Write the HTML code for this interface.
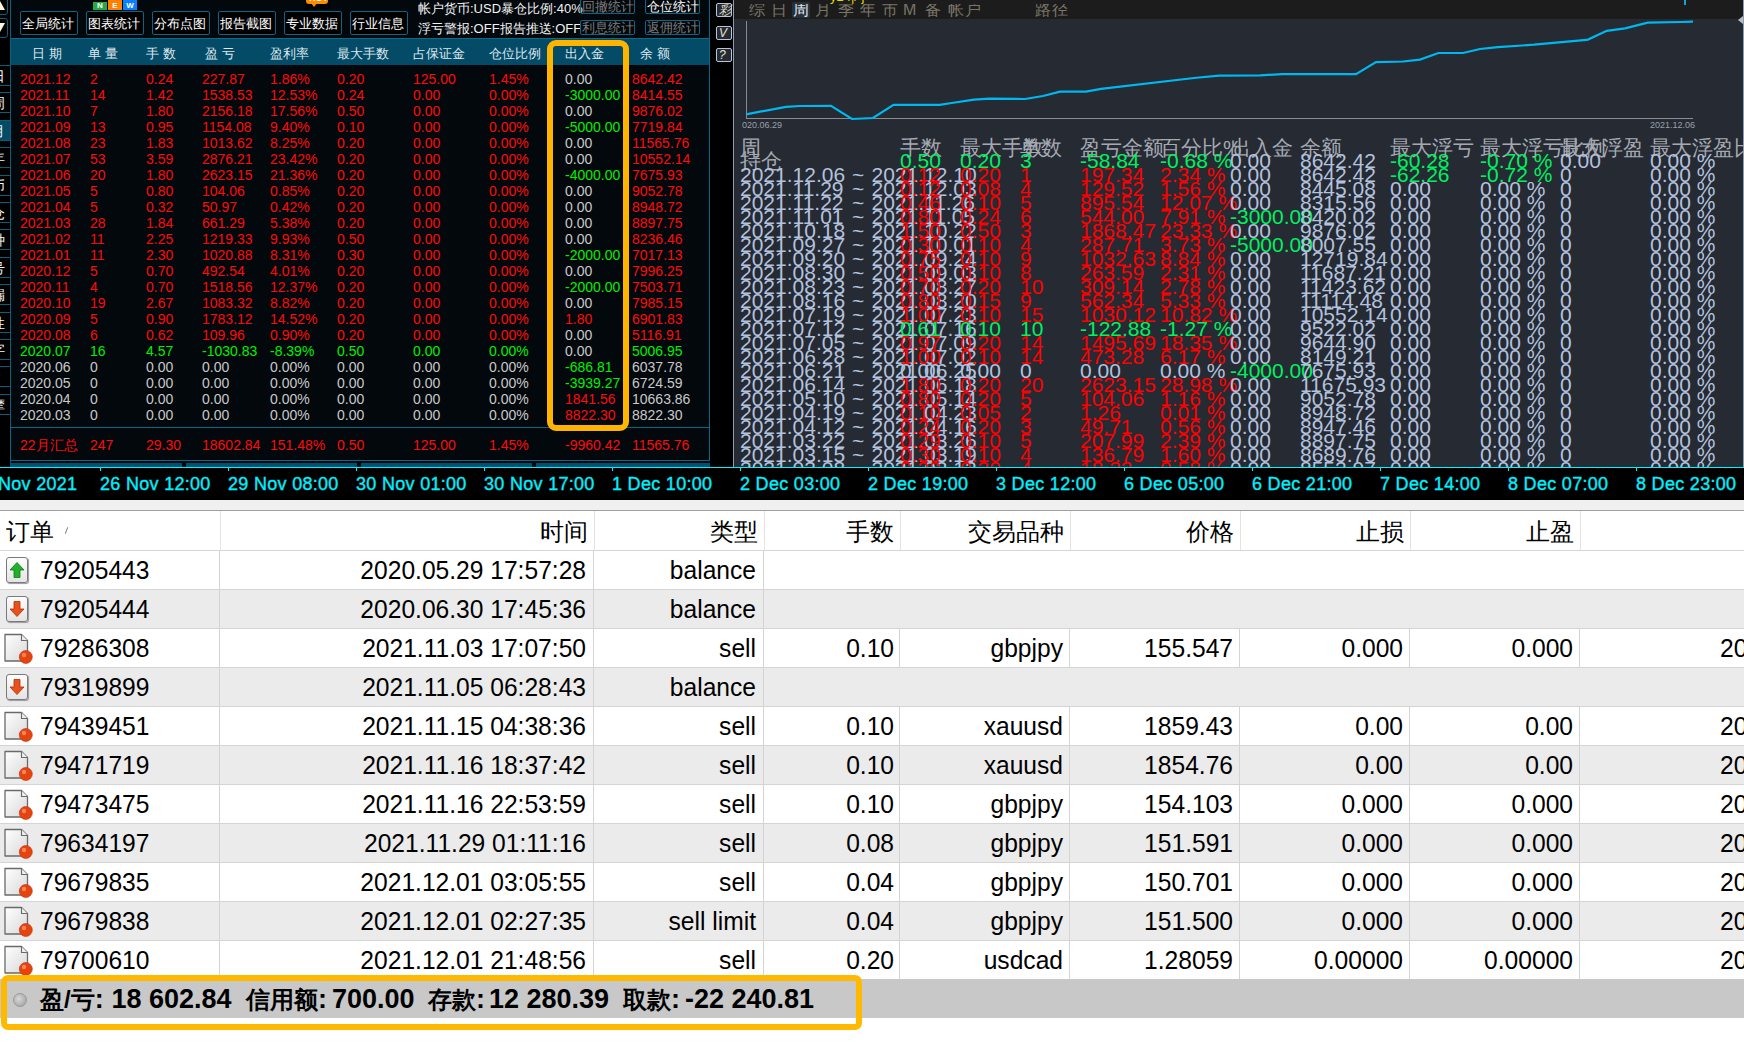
<!DOCTYPE html><html><head><meta charset="utf-8"><style>
*{margin:0;padding:0;box-sizing:border-box}
html,body{width:1744px;height:1042px;overflow:hidden;background:#fff;font-family:"Liberation Sans",sans-serif}
.ab{position:absolute;white-space:pre;line-height:1}
#lp{position:absolute;left:0;top:0;width:735px;height:467px;background:#03080c;overflow:hidden}
#rp{position:absolute;left:735px;top:0;width:1009px;height:467px;background:#252a33;overflow:hidden}
#ax{position:absolute;left:0;top:467px;width:1744px;height:33px;background:#000;overflow:hidden}
#bt{position:absolute;left:0;top:500px;width:1744px;height:542px;background:#fff;overflow:hidden}
</style></head><body>
<div id="lp">
<div class="ab" style="left:0;top:0;width:10px;height:467px;background:#000"></div>
<div class="ab" style="left:10px;top:0;width:1px;height:467px;background:#0b5f7c"></div>
<div class="ab" style="left:-4px;top:-6px;width:12px;height:21px;border:1px solid #0b5f7c;border-radius:3px"></div>
<div class="ab" style="left:-4px;top:18px;width:12px;height:20px;border:1px solid #0b5f7c;border-radius:3px"></div>
<div class="ab" style="left:-5px;top:1px;width:0;height:0;border-left:5px solid transparent;border-right:5px solid transparent;border-bottom:9px solid #fff4e0"></div>
<div class="ab" style="left:-5px;top:23px;width:0;height:0;border-left:5px solid transparent;border-right:5px solid transparent;border-top:9px solid #fff4e0"></div>
<div class="ab" style="left:0;top:65px;width:10px;height:21px;background:#000;border-top:1px solid #0b5f7c;border-bottom:1px solid #0b5f7c;overflow:hidden"><div class="ab" style="left:-9px;top:3px;font-size:14px;color:#f4f4f4">日</div></div>
<div class="ab" style="left:0;top:92px;width:10px;height:21px;background:#000;border-top:1px solid #0b5f7c;border-bottom:1px solid #0b5f7c;overflow:hidden"><div class="ab" style="left:-9px;top:3px;font-size:14px;color:#f4f4f4">周</div></div>
<div class="ab" style="left:0;top:120px;width:10px;height:21px;background:#034b67;border-top:1px solid #0b5f7c;border-bottom:1px solid #0b5f7c;overflow:hidden"><div class="ab" style="left:-9px;top:3px;font-size:14px;color:#f4f4f4">月</div></div>
<div class="ab" style="left:0;top:147px;width:10px;height:21px;background:#000;border-top:1px solid #0b5f7c;border-bottom:1px solid #0b5f7c;overflow:hidden"><div class="ab" style="left:-9px;top:3px;font-size:14px;color:#f4f4f4">年</div></div>
<div class="ab" style="left:0;top:175px;width:10px;height:21px;background:#000;border-top:1px solid #0b5f7c;border-bottom:1px solid #0b5f7c;overflow:hidden"><div class="ab" style="left:-9px;top:3px;font-size:14px;color:#f4f4f4">币</div></div>
<div class="ab" style="left:0;top:202px;width:10px;height:21px;background:#000;border-top:1px solid #0b5f7c;border-bottom:1px solid #0b5f7c;overflow:hidden"><div class="ab" style="left:-9px;top:3px;font-size:14px;color:#f4f4f4">仓</div></div>
<div class="ab" style="left:0;top:229px;width:10px;height:21px;background:#000;border-top:1px solid #0b5f7c;border-bottom:1px solid #0b5f7c;overflow:hidden"><div class="ab" style="left:-9px;top:3px;font-size:14px;color:#f4f4f4">种</div></div>
<div class="ab" style="left:0;top:257px;width:10px;height:21px;background:#000;border-top:1px solid #0b5f7c;border-bottom:1px solid #0b5f7c;overflow:hidden"><div class="ab" style="left:-9px;top:3px;font-size:14px;color:#f4f4f4">号</div></div>
<div class="ab" style="left:0;top:284px;width:10px;height:21px;background:#000;border-top:1px solid #0b5f7c;border-bottom:1px solid #0b5f7c;overflow:hidden"><div class="ab" style="left:-9px;top:3px;font-size:14px;color:#f4f4f4">漏</div></div>
<div class="ab" style="left:0;top:312px;width:10px;height:21px;background:#000;border-top:1px solid #0b5f7c;border-bottom:1px solid #0b5f7c;overflow:hidden"><div class="ab" style="left:-9px;top:3px;font-size:14px;color:#f4f4f4">性</div></div>
<div class="ab" style="left:0;top:339px;width:10px;height:21px;background:#000;border-top:1px solid #0b5f7c;border-bottom:1px solid #0b5f7c;overflow:hidden"><div class="ab" style="left:-9px;top:3px;font-size:14px;color:#f4f4f4">字</div></div>
<div class="ab" style="left:0;top:366px;width:10px;height:21px;background:#000;border-top:1px solid #0b5f7c;border-bottom:1px solid #0b5f7c;overflow:hidden"><div class="ab" style="left:-9px;top:3px;font-size:14px;color:#f4f4f4">P</div></div>
<div class="ab" style="left:0;top:394px;width:10px;height:21px;background:#000;border-top:1px solid #0b5f7c;border-bottom:1px solid #0b5f7c;overflow:hidden"><div class="ab" style="left:-9px;top:3px;font-size:14px;color:#f4f4f4">摩</div></div>
<div class="ab" style="left:11px;top:38px;width:699px;height:27px;background:#034b67;border-top:1px solid #0d6a88"></div>
<div class="ab" style="left:32px;top:47px;font-size:13px;color:#dfe8ee">日 期</div>
<div class="ab" style="left:88px;top:47px;font-size:13px;color:#dfe8ee">单 量</div>
<div class="ab" style="left:146px;top:47px;font-size:13px;color:#dfe8ee">手 数</div>
<div class="ab" style="left:205px;top:47px;font-size:13px;color:#dfe8ee">盈 亏</div>
<div class="ab" style="left:270px;top:47px;font-size:13px;color:#dfe8ee">盈利率</div>
<div class="ab" style="left:337px;top:47px;font-size:13px;color:#dfe8ee">最大手数</div>
<div class="ab" style="left:413px;top:47px;font-size:13px;color:#dfe8ee">占保证金</div>
<div class="ab" style="left:489px;top:47px;font-size:13px;color:#dfe8ee">仓位比例</div>
<div class="ab" style="left:565px;top:47px;font-size:13px;color:#dfe8ee">出入金</div>
<div class="ab" style="left:640px;top:47px;font-size:13px;color:#dfe8ee">余 额</div>
<div class="ab" style="left:20px;top:11px;width:58px;height:24px;border:1px solid #0c6585;border-radius:2px;background:#000"></div>
<div class="ab" style="left:22px;top:17px;font-size:13px;color:#fff">全局统计</div>
<div class="ab" style="left:86px;top:11px;width:58px;height:24px;border:1px solid #0c6585;border-radius:2px;background:#000"></div>
<div class="ab" style="left:88px;top:17px;font-size:13px;color:#fff">图表统计</div>
<div class="ab" style="left:152px;top:11px;width:58px;height:24px;border:1px solid #0c6585;border-radius:2px;background:#000"></div>
<div class="ab" style="left:154px;top:17px;font-size:13px;color:#fff">分布点图</div>
<div class="ab" style="left:218px;top:11px;width:58px;height:24px;border:1px solid #0c6585;border-radius:2px;background:#000"></div>
<div class="ab" style="left:220px;top:17px;font-size:13px;color:#fff">报告截图</div>
<div class="ab" style="left:284px;top:11px;width:58px;height:24px;border:1px solid #0c6585;border-radius:2px;background:#000"></div>
<div class="ab" style="left:286px;top:17px;font-size:13px;color:#fff">专业数据</div>
<div class="ab" style="left:350px;top:11px;width:58px;height:24px;border:1px solid #0c6585;border-radius:2px;background:#000"></div>
<div class="ab" style="left:352px;top:17px;font-size:13px;color:#fff">行业信息</div>
<div class="ab" style="left:93px;top:2px;width:14px;height:8px;background:#2aa842;font-size:8px;color:#fff;text-align:center;font-weight:bold;line-height:8px;padding-top:0px">N</div>
<div class="ab" style="left:108px;top:0px;width:14px;height:10px;background:#ff8000;font-size:8px;color:#fff;text-align:center;font-weight:bold;line-height:10px;padding-top:1px">E</div>
<div class="ab" style="left:123px;top:0px;width:14px;height:10px;background:#0a80ff;font-size:8px;color:#fff;text-align:center;font-weight:bold;line-height:10px;padding-top:1px">W</div>
<div class="ab" style="left:305px;top:0px;width:25px;height:9px;background:#000"></div>
<div class="ab" style="left:306px;top:0px;width:22px;height:4px;background:#ff8a00;border-radius:0 0 3px 3px"></div>
<div class="ab" style="left:309px;top:-6px;font-size:9px;font-weight:bold;color:#fff">HOT</div>
<div class="ab" style="left:311px;top:3px;width:0;height:0;border-left:3px solid transparent;border-right:3px solid transparent;border-top:4px solid #ff8a00"></div>
<div class="ab" style="left:418px;top:2px;font-size:13px;color:#f2f2f2">帐户货币:USD暴仓比例:40%</div>
<div class="ab" style="left:418px;top:22px;font-size:13px;color:#f2f2f2">浮亏警报:OFF报告推送:OFF</div>
<div class="ab" style="left:580px;top:-1px;width:55px;height:15px;border:1px solid #0c6585;border-radius:2px"></div>
<div class="ab" style="left:582px;top:0px;font-size:13px;color:#7d7d7d">回撤统计</div>
<div class="ab" style="left:645px;top:-1px;width:55px;height:15px;border:1px solid #0c6585;border-radius:2px"></div>
<div class="ab" style="left:647px;top:0px;font-size:13px;color:#fff">仓位统计</div>
<div class="ab" style="left:580px;top:20px;width:55px;height:15px;border:1px solid #0c6585;border-radius:2px"></div>
<div class="ab" style="left:582px;top:21px;font-size:13px;color:#7d7d7d">利息统计</div>
<div class="ab" style="left:645px;top:20px;width:55px;height:15px;border:1px solid #0c6585;border-radius:2px"></div>
<div class="ab" style="left:647px;top:21px;font-size:13px;color:#7d7d7d">返佣统计</div>
<div class="ab" style="left:20px;top:72px;font-size:14px;color:#ff0a0a">2021.12</div>
<div class="ab" style="left:90px;top:72px;font-size:14px;color:#ff0a0a">2</div>
<div class="ab" style="left:146px;top:72px;font-size:14px;color:#ff0a0a">0.24</div>
<div class="ab" style="left:202px;top:72px;font-size:14px;color:#ff0a0a">227.87</div>
<div class="ab" style="left:270px;top:72px;font-size:14px;color:#ff0a0a">1.86%</div>
<div class="ab" style="left:337px;top:72px;font-size:14px;color:#ff0a0a">0.20</div>
<div class="ab" style="left:413px;top:72px;font-size:14px;color:#ff0a0a">125.00</div>
<div class="ab" style="left:489px;top:72px;font-size:14px;color:#ff0a0a">1.45%</div>
<div class="ab" style="left:565px;top:72px;font-size:14px;color:#c8c8c8">0.00</div>
<div class="ab" style="left:632px;top:72px;font-size:14px;color:#ff0a0a">8642.42</div>
<div class="ab" style="left:20px;top:88px;font-size:14px;color:#ff0a0a">2021.11</div>
<div class="ab" style="left:90px;top:88px;font-size:14px;color:#ff0a0a">14</div>
<div class="ab" style="left:146px;top:88px;font-size:14px;color:#ff0a0a">1.42</div>
<div class="ab" style="left:202px;top:88px;font-size:14px;color:#ff0a0a">1538.53</div>
<div class="ab" style="left:270px;top:88px;font-size:14px;color:#ff0a0a">12.53%</div>
<div class="ab" style="left:337px;top:88px;font-size:14px;color:#ff0a0a">0.24</div>
<div class="ab" style="left:413px;top:88px;font-size:14px;color:#ff0a0a">0.00</div>
<div class="ab" style="left:489px;top:88px;font-size:14px;color:#ff0a0a">0.00%</div>
<div class="ab" style="left:565px;top:88px;font-size:14px;color:#00f000">-3000.00</div>
<div class="ab" style="left:632px;top:88px;font-size:14px;color:#ff0a0a">8414.55</div>
<div class="ab" style="left:20px;top:104px;font-size:14px;color:#ff0a0a">2021.10</div>
<div class="ab" style="left:90px;top:104px;font-size:14px;color:#ff0a0a">7</div>
<div class="ab" style="left:146px;top:104px;font-size:14px;color:#ff0a0a">1.80</div>
<div class="ab" style="left:202px;top:104px;font-size:14px;color:#ff0a0a">2156.18</div>
<div class="ab" style="left:270px;top:104px;font-size:14px;color:#ff0a0a">17.56%</div>
<div class="ab" style="left:337px;top:104px;font-size:14px;color:#ff0a0a">0.50</div>
<div class="ab" style="left:413px;top:104px;font-size:14px;color:#ff0a0a">0.00</div>
<div class="ab" style="left:489px;top:104px;font-size:14px;color:#ff0a0a">0.00%</div>
<div class="ab" style="left:565px;top:104px;font-size:14px;color:#c8c8c8">0.00</div>
<div class="ab" style="left:632px;top:104px;font-size:14px;color:#ff0a0a">9876.02</div>
<div class="ab" style="left:20px;top:120px;font-size:14px;color:#ff0a0a">2021.09</div>
<div class="ab" style="left:90px;top:120px;font-size:14px;color:#ff0a0a">13</div>
<div class="ab" style="left:146px;top:120px;font-size:14px;color:#ff0a0a">0.95</div>
<div class="ab" style="left:202px;top:120px;font-size:14px;color:#ff0a0a">1154.08</div>
<div class="ab" style="left:270px;top:120px;font-size:14px;color:#ff0a0a">9.40%</div>
<div class="ab" style="left:337px;top:120px;font-size:14px;color:#ff0a0a">0.10</div>
<div class="ab" style="left:413px;top:120px;font-size:14px;color:#ff0a0a">0.00</div>
<div class="ab" style="left:489px;top:120px;font-size:14px;color:#ff0a0a">0.00%</div>
<div class="ab" style="left:565px;top:120px;font-size:14px;color:#00f000">-5000.00</div>
<div class="ab" style="left:632px;top:120px;font-size:14px;color:#ff0a0a">7719.84</div>
<div class="ab" style="left:20px;top:136px;font-size:14px;color:#ff0a0a">2021.08</div>
<div class="ab" style="left:90px;top:136px;font-size:14px;color:#ff0a0a">23</div>
<div class="ab" style="left:146px;top:136px;font-size:14px;color:#ff0a0a">1.83</div>
<div class="ab" style="left:202px;top:136px;font-size:14px;color:#ff0a0a">1013.62</div>
<div class="ab" style="left:270px;top:136px;font-size:14px;color:#ff0a0a">8.25%</div>
<div class="ab" style="left:337px;top:136px;font-size:14px;color:#ff0a0a">0.20</div>
<div class="ab" style="left:413px;top:136px;font-size:14px;color:#ff0a0a">0.00</div>
<div class="ab" style="left:489px;top:136px;font-size:14px;color:#ff0a0a">0.00%</div>
<div class="ab" style="left:565px;top:136px;font-size:14px;color:#c8c8c8">0.00</div>
<div class="ab" style="left:632px;top:136px;font-size:14px;color:#ff0a0a">11565.76</div>
<div class="ab" style="left:20px;top:152px;font-size:14px;color:#ff0a0a">2021.07</div>
<div class="ab" style="left:90px;top:152px;font-size:14px;color:#ff0a0a">53</div>
<div class="ab" style="left:146px;top:152px;font-size:14px;color:#ff0a0a">3.59</div>
<div class="ab" style="left:202px;top:152px;font-size:14px;color:#ff0a0a">2876.21</div>
<div class="ab" style="left:270px;top:152px;font-size:14px;color:#ff0a0a">23.42%</div>
<div class="ab" style="left:337px;top:152px;font-size:14px;color:#ff0a0a">0.20</div>
<div class="ab" style="left:413px;top:152px;font-size:14px;color:#ff0a0a">0.00</div>
<div class="ab" style="left:489px;top:152px;font-size:14px;color:#ff0a0a">0.00%</div>
<div class="ab" style="left:565px;top:152px;font-size:14px;color:#c8c8c8">0.00</div>
<div class="ab" style="left:632px;top:152px;font-size:14px;color:#ff0a0a">10552.14</div>
<div class="ab" style="left:20px;top:168px;font-size:14px;color:#ff0a0a">2021.06</div>
<div class="ab" style="left:90px;top:168px;font-size:14px;color:#ff0a0a">20</div>
<div class="ab" style="left:146px;top:168px;font-size:14px;color:#ff0a0a">1.80</div>
<div class="ab" style="left:202px;top:168px;font-size:14px;color:#ff0a0a">2623.15</div>
<div class="ab" style="left:270px;top:168px;font-size:14px;color:#ff0a0a">21.36%</div>
<div class="ab" style="left:337px;top:168px;font-size:14px;color:#ff0a0a">0.20</div>
<div class="ab" style="left:413px;top:168px;font-size:14px;color:#ff0a0a">0.00</div>
<div class="ab" style="left:489px;top:168px;font-size:14px;color:#ff0a0a">0.00%</div>
<div class="ab" style="left:565px;top:168px;font-size:14px;color:#00f000">-4000.00</div>
<div class="ab" style="left:632px;top:168px;font-size:14px;color:#ff0a0a">7675.93</div>
<div class="ab" style="left:20px;top:184px;font-size:14px;color:#ff0a0a">2021.05</div>
<div class="ab" style="left:90px;top:184px;font-size:14px;color:#ff0a0a">5</div>
<div class="ab" style="left:146px;top:184px;font-size:14px;color:#ff0a0a">0.80</div>
<div class="ab" style="left:202px;top:184px;font-size:14px;color:#ff0a0a">104.06</div>
<div class="ab" style="left:270px;top:184px;font-size:14px;color:#ff0a0a">0.85%</div>
<div class="ab" style="left:337px;top:184px;font-size:14px;color:#ff0a0a">0.20</div>
<div class="ab" style="left:413px;top:184px;font-size:14px;color:#ff0a0a">0.00</div>
<div class="ab" style="left:489px;top:184px;font-size:14px;color:#ff0a0a">0.00%</div>
<div class="ab" style="left:565px;top:184px;font-size:14px;color:#c8c8c8">0.00</div>
<div class="ab" style="left:632px;top:184px;font-size:14px;color:#ff0a0a">9052.78</div>
<div class="ab" style="left:20px;top:200px;font-size:14px;color:#ff0a0a">2021.04</div>
<div class="ab" style="left:90px;top:200px;font-size:14px;color:#ff0a0a">5</div>
<div class="ab" style="left:146px;top:200px;font-size:14px;color:#ff0a0a">0.32</div>
<div class="ab" style="left:202px;top:200px;font-size:14px;color:#ff0a0a">50.97</div>
<div class="ab" style="left:270px;top:200px;font-size:14px;color:#ff0a0a">0.42%</div>
<div class="ab" style="left:337px;top:200px;font-size:14px;color:#ff0a0a">0.20</div>
<div class="ab" style="left:413px;top:200px;font-size:14px;color:#ff0a0a">0.00</div>
<div class="ab" style="left:489px;top:200px;font-size:14px;color:#ff0a0a">0.00%</div>
<div class="ab" style="left:565px;top:200px;font-size:14px;color:#c8c8c8">0.00</div>
<div class="ab" style="left:632px;top:200px;font-size:14px;color:#ff0a0a">8948.72</div>
<div class="ab" style="left:20px;top:216px;font-size:14px;color:#ff0a0a">2021.03</div>
<div class="ab" style="left:90px;top:216px;font-size:14px;color:#ff0a0a">28</div>
<div class="ab" style="left:146px;top:216px;font-size:14px;color:#ff0a0a">1.84</div>
<div class="ab" style="left:202px;top:216px;font-size:14px;color:#ff0a0a">661.29</div>
<div class="ab" style="left:270px;top:216px;font-size:14px;color:#ff0a0a">5.38%</div>
<div class="ab" style="left:337px;top:216px;font-size:14px;color:#ff0a0a">0.20</div>
<div class="ab" style="left:413px;top:216px;font-size:14px;color:#ff0a0a">0.00</div>
<div class="ab" style="left:489px;top:216px;font-size:14px;color:#ff0a0a">0.00%</div>
<div class="ab" style="left:565px;top:216px;font-size:14px;color:#c8c8c8">0.00</div>
<div class="ab" style="left:632px;top:216px;font-size:14px;color:#ff0a0a">8897.75</div>
<div class="ab" style="left:20px;top:232px;font-size:14px;color:#ff0a0a">2021.02</div>
<div class="ab" style="left:90px;top:232px;font-size:14px;color:#ff0a0a">11</div>
<div class="ab" style="left:146px;top:232px;font-size:14px;color:#ff0a0a">2.25</div>
<div class="ab" style="left:202px;top:232px;font-size:14px;color:#ff0a0a">1219.33</div>
<div class="ab" style="left:270px;top:232px;font-size:14px;color:#ff0a0a">9.93%</div>
<div class="ab" style="left:337px;top:232px;font-size:14px;color:#ff0a0a">0.50</div>
<div class="ab" style="left:413px;top:232px;font-size:14px;color:#ff0a0a">0.00</div>
<div class="ab" style="left:489px;top:232px;font-size:14px;color:#ff0a0a">0.00%</div>
<div class="ab" style="left:565px;top:232px;font-size:14px;color:#c8c8c8">0.00</div>
<div class="ab" style="left:632px;top:232px;font-size:14px;color:#ff0a0a">8236.46</div>
<div class="ab" style="left:20px;top:248px;font-size:14px;color:#ff0a0a">2021.01</div>
<div class="ab" style="left:90px;top:248px;font-size:14px;color:#ff0a0a">11</div>
<div class="ab" style="left:146px;top:248px;font-size:14px;color:#ff0a0a">2.30</div>
<div class="ab" style="left:202px;top:248px;font-size:14px;color:#ff0a0a">1020.88</div>
<div class="ab" style="left:270px;top:248px;font-size:14px;color:#ff0a0a">8.31%</div>
<div class="ab" style="left:337px;top:248px;font-size:14px;color:#ff0a0a">0.30</div>
<div class="ab" style="left:413px;top:248px;font-size:14px;color:#ff0a0a">0.00</div>
<div class="ab" style="left:489px;top:248px;font-size:14px;color:#ff0a0a">0.00%</div>
<div class="ab" style="left:565px;top:248px;font-size:14px;color:#00f000">-2000.00</div>
<div class="ab" style="left:632px;top:248px;font-size:14px;color:#ff0a0a">7017.13</div>
<div class="ab" style="left:20px;top:264px;font-size:14px;color:#ff0a0a">2020.12</div>
<div class="ab" style="left:90px;top:264px;font-size:14px;color:#ff0a0a">5</div>
<div class="ab" style="left:146px;top:264px;font-size:14px;color:#ff0a0a">0.70</div>
<div class="ab" style="left:202px;top:264px;font-size:14px;color:#ff0a0a">492.54</div>
<div class="ab" style="left:270px;top:264px;font-size:14px;color:#ff0a0a">4.01%</div>
<div class="ab" style="left:337px;top:264px;font-size:14px;color:#ff0a0a">0.20</div>
<div class="ab" style="left:413px;top:264px;font-size:14px;color:#ff0a0a">0.00</div>
<div class="ab" style="left:489px;top:264px;font-size:14px;color:#ff0a0a">0.00%</div>
<div class="ab" style="left:565px;top:264px;font-size:14px;color:#c8c8c8">0.00</div>
<div class="ab" style="left:632px;top:264px;font-size:14px;color:#ff0a0a">7996.25</div>
<div class="ab" style="left:20px;top:280px;font-size:14px;color:#ff0a0a">2020.11</div>
<div class="ab" style="left:90px;top:280px;font-size:14px;color:#ff0a0a">4</div>
<div class="ab" style="left:146px;top:280px;font-size:14px;color:#ff0a0a">0.70</div>
<div class="ab" style="left:202px;top:280px;font-size:14px;color:#ff0a0a">1518.56</div>
<div class="ab" style="left:270px;top:280px;font-size:14px;color:#ff0a0a">12.37%</div>
<div class="ab" style="left:337px;top:280px;font-size:14px;color:#ff0a0a">0.20</div>
<div class="ab" style="left:413px;top:280px;font-size:14px;color:#ff0a0a">0.00</div>
<div class="ab" style="left:489px;top:280px;font-size:14px;color:#ff0a0a">0.00%</div>
<div class="ab" style="left:565px;top:280px;font-size:14px;color:#00f000">-2000.00</div>
<div class="ab" style="left:632px;top:280px;font-size:14px;color:#ff0a0a">7503.71</div>
<div class="ab" style="left:20px;top:296px;font-size:14px;color:#ff0a0a">2020.10</div>
<div class="ab" style="left:90px;top:296px;font-size:14px;color:#ff0a0a">19</div>
<div class="ab" style="left:146px;top:296px;font-size:14px;color:#ff0a0a">2.67</div>
<div class="ab" style="left:202px;top:296px;font-size:14px;color:#ff0a0a">1083.32</div>
<div class="ab" style="left:270px;top:296px;font-size:14px;color:#ff0a0a">8.82%</div>
<div class="ab" style="left:337px;top:296px;font-size:14px;color:#ff0a0a">0.20</div>
<div class="ab" style="left:413px;top:296px;font-size:14px;color:#ff0a0a">0.00</div>
<div class="ab" style="left:489px;top:296px;font-size:14px;color:#ff0a0a">0.00%</div>
<div class="ab" style="left:565px;top:296px;font-size:14px;color:#c8c8c8">0.00</div>
<div class="ab" style="left:632px;top:296px;font-size:14px;color:#ff0a0a">7985.15</div>
<div class="ab" style="left:20px;top:312px;font-size:14px;color:#ff0a0a">2020.09</div>
<div class="ab" style="left:90px;top:312px;font-size:14px;color:#ff0a0a">5</div>
<div class="ab" style="left:146px;top:312px;font-size:14px;color:#ff0a0a">0.90</div>
<div class="ab" style="left:202px;top:312px;font-size:14px;color:#ff0a0a">1783.12</div>
<div class="ab" style="left:270px;top:312px;font-size:14px;color:#ff0a0a">14.52%</div>
<div class="ab" style="left:337px;top:312px;font-size:14px;color:#ff0a0a">0.20</div>
<div class="ab" style="left:413px;top:312px;font-size:14px;color:#ff0a0a">0.00</div>
<div class="ab" style="left:489px;top:312px;font-size:14px;color:#ff0a0a">0.00%</div>
<div class="ab" style="left:565px;top:312px;font-size:14px;color:#ff0a0a">1.80</div>
<div class="ab" style="left:632px;top:312px;font-size:14px;color:#ff0a0a">6901.83</div>
<div class="ab" style="left:20px;top:328px;font-size:14px;color:#ff0a0a">2020.08</div>
<div class="ab" style="left:90px;top:328px;font-size:14px;color:#ff0a0a">6</div>
<div class="ab" style="left:146px;top:328px;font-size:14px;color:#ff0a0a">0.62</div>
<div class="ab" style="left:202px;top:328px;font-size:14px;color:#ff0a0a">109.96</div>
<div class="ab" style="left:270px;top:328px;font-size:14px;color:#ff0a0a">0.90%</div>
<div class="ab" style="left:337px;top:328px;font-size:14px;color:#ff0a0a">0.20</div>
<div class="ab" style="left:413px;top:328px;font-size:14px;color:#ff0a0a">0.00</div>
<div class="ab" style="left:489px;top:328px;font-size:14px;color:#ff0a0a">0.00%</div>
<div class="ab" style="left:565px;top:328px;font-size:14px;color:#c8c8c8">0.00</div>
<div class="ab" style="left:632px;top:328px;font-size:14px;color:#ff0a0a">5116.91</div>
<div class="ab" style="left:20px;top:344px;font-size:14px;color:#00f000">2020.07</div>
<div class="ab" style="left:90px;top:344px;font-size:14px;color:#00f000">16</div>
<div class="ab" style="left:146px;top:344px;font-size:14px;color:#00f000">4.57</div>
<div class="ab" style="left:202px;top:344px;font-size:14px;color:#00f000">-1030.83</div>
<div class="ab" style="left:270px;top:344px;font-size:14px;color:#00f000">-8.39%</div>
<div class="ab" style="left:337px;top:344px;font-size:14px;color:#00f000">0.50</div>
<div class="ab" style="left:413px;top:344px;font-size:14px;color:#00f000">0.00</div>
<div class="ab" style="left:489px;top:344px;font-size:14px;color:#00f000">0.00%</div>
<div class="ab" style="left:565px;top:344px;font-size:14px;color:#c8c8c8">0.00</div>
<div class="ab" style="left:632px;top:344px;font-size:14px;color:#00f000">5006.95</div>
<div class="ab" style="left:20px;top:360px;font-size:14px;color:#c8c8c8">2020.06</div>
<div class="ab" style="left:90px;top:360px;font-size:14px;color:#c8c8c8">0</div>
<div class="ab" style="left:146px;top:360px;font-size:14px;color:#c8c8c8">0.00</div>
<div class="ab" style="left:202px;top:360px;font-size:14px;color:#c8c8c8">0.00</div>
<div class="ab" style="left:270px;top:360px;font-size:14px;color:#c8c8c8">0.00%</div>
<div class="ab" style="left:337px;top:360px;font-size:14px;color:#c8c8c8">0.00</div>
<div class="ab" style="left:413px;top:360px;font-size:14px;color:#c8c8c8">0.00</div>
<div class="ab" style="left:489px;top:360px;font-size:14px;color:#c8c8c8">0.00%</div>
<div class="ab" style="left:565px;top:360px;font-size:14px;color:#00f000">-686.81</div>
<div class="ab" style="left:632px;top:360px;font-size:14px;color:#c8c8c8">6037.78</div>
<div class="ab" style="left:20px;top:376px;font-size:14px;color:#c8c8c8">2020.05</div>
<div class="ab" style="left:90px;top:376px;font-size:14px;color:#c8c8c8">0</div>
<div class="ab" style="left:146px;top:376px;font-size:14px;color:#c8c8c8">0.00</div>
<div class="ab" style="left:202px;top:376px;font-size:14px;color:#c8c8c8">0.00</div>
<div class="ab" style="left:270px;top:376px;font-size:14px;color:#c8c8c8">0.00%</div>
<div class="ab" style="left:337px;top:376px;font-size:14px;color:#c8c8c8">0.00</div>
<div class="ab" style="left:413px;top:376px;font-size:14px;color:#c8c8c8">0.00</div>
<div class="ab" style="left:489px;top:376px;font-size:14px;color:#c8c8c8">0.00%</div>
<div class="ab" style="left:565px;top:376px;font-size:14px;color:#00f000">-3939.27</div>
<div class="ab" style="left:632px;top:376px;font-size:14px;color:#c8c8c8">6724.59</div>
<div class="ab" style="left:20px;top:392px;font-size:14px;color:#c8c8c8">2020.04</div>
<div class="ab" style="left:90px;top:392px;font-size:14px;color:#c8c8c8">0</div>
<div class="ab" style="left:146px;top:392px;font-size:14px;color:#c8c8c8">0.00</div>
<div class="ab" style="left:202px;top:392px;font-size:14px;color:#c8c8c8">0.00</div>
<div class="ab" style="left:270px;top:392px;font-size:14px;color:#c8c8c8">0.00%</div>
<div class="ab" style="left:337px;top:392px;font-size:14px;color:#c8c8c8">0.00</div>
<div class="ab" style="left:413px;top:392px;font-size:14px;color:#c8c8c8">0.00</div>
<div class="ab" style="left:489px;top:392px;font-size:14px;color:#c8c8c8">0.00%</div>
<div class="ab" style="left:565px;top:392px;font-size:14px;color:#ff0a0a">1841.56</div>
<div class="ab" style="left:632px;top:392px;font-size:14px;color:#c8c8c8">10663.86</div>
<div class="ab" style="left:20px;top:408px;font-size:14px;color:#c8c8c8">2020.03</div>
<div class="ab" style="left:90px;top:408px;font-size:14px;color:#c8c8c8">0</div>
<div class="ab" style="left:146px;top:408px;font-size:14px;color:#c8c8c8">0.00</div>
<div class="ab" style="left:202px;top:408px;font-size:14px;color:#c8c8c8">0.00</div>
<div class="ab" style="left:270px;top:408px;font-size:14px;color:#c8c8c8">0.00%</div>
<div class="ab" style="left:337px;top:408px;font-size:14px;color:#c8c8c8">0.00</div>
<div class="ab" style="left:413px;top:408px;font-size:14px;color:#c8c8c8">0.00</div>
<div class="ab" style="left:489px;top:408px;font-size:14px;color:#c8c8c8">0.00%</div>
<div class="ab" style="left:565px;top:408px;font-size:14px;color:#ff0a0a">8822.30</div>
<div class="ab" style="left:632px;top:408px;font-size:14px;color:#c8c8c8">8822.30</div>
<div class="ab" style="left:11px;top:427px;width:699px;height:1px;background:#0b6584"></div>
<div class="ab" style="left:10px;top:427px;width:700px;height:34px;border:1px solid #0b6584;border-top:1px solid #0b6584"></div>
<div class="ab" style="left:709px;top:0px;width:1px;height:460px;background:#0b6584"></div>
<div class="ab" style="left:20px;top:438px;font-size:14px;color:#ff0a0a">22月汇总</div>
<div class="ab" style="left:90px;top:438px;font-size:14px;color:#ff0a0a">247</div>
<div class="ab" style="left:146px;top:438px;font-size:14px;color:#ff0a0a">29.30</div>
<div class="ab" style="left:202px;top:438px;font-size:14px;color:#ff0a0a">18602.84</div>
<div class="ab" style="left:270px;top:438px;font-size:14px;color:#ff0a0a">151.48%</div>
<div class="ab" style="left:337px;top:438px;font-size:14px;color:#ff0a0a">0.50</div>
<div class="ab" style="left:413px;top:438px;font-size:14px;color:#ff0a0a">125.00</div>
<div class="ab" style="left:489px;top:438px;font-size:14px;color:#ff0a0a">1.45%</div>
<div class="ab" style="left:565px;top:438px;font-size:14px;color:#ff0a0a">-9960.42</div>
<div class="ab" style="left:632px;top:438px;font-size:14px;color:#ff0a0a">11565.76</div>
<div class="ab" style="left:10px;top:463px;width:172px;height:4px;background:#024f6e"></div>
<div class="ab" style="left:186px;top:463px;width:171px;height:4px;background:#024f6e"></div>
<div class="ab" style="left:361px;top:463px;width:171px;height:4px;background:#024f6e"></div>
<div class="ab" style="left:536px;top:463px;width:174px;height:4px;background:#024f6e"></div>
<div class="ab" style="left:547px;top:40px;width:82px;height:391px;border:6px solid #ffb400;border-radius:9px"></div>
<div class="ab" style="left:710px;top:0;width:25px;height:467px;background:#000"></div>
<div class="ab" style="left:733px;top:0;width:1px;height:467px;background:#8e9bb0"></div>
<div class="ab" style="left:734px;top:19px;width:1px;height:448px;background:#252a33"></div>
<div class="ab" style="left:734px;top:0;width:1px;height:19px;background:#1c1c1d"></div>
<div class="ab" style="left:716px;top:3px;width:16px;height:14px;border:1px solid #b8c4d8;border-radius:2px;background:#262b33"></div>
<div class="ab" style="left:716px;top:26px;width:16px;height:14px;border:1px solid #b8c4d8;border-radius:2px;background:#262b33"></div>
<div class="ab" style="left:716px;top:48px;width:16px;height:14px;border:1px solid #b8c4d8;border-radius:2px;background:#262b33"></div>
<div class="ab" style="left:719px;top:4px;font-size:12px;font-style:italic;color:#e8e0d0">彩</div>
<div class="ab" style="left:719px;top:27px;font-size:12px;font-style:italic;color:#e8e0d0">V</div>
<div class="ab" style="left:719px;top:49px;font-size:12px;font-style:italic;color:#e8e0d0">?</div>
</div>
<div id="rp">
<div class="ab" style="left:0;top:0;width:1009px;height:19px;background:#1c1c1d"></div>
<div class="ab" style="left:57px;top:2px;width:18px;height:16px;background:#28303c;border-radius:2px"></div>
<div class="ab" style="left:0;top:4px;width:400px;height:15px;overflow:hidden">
<div class="ab" style="left:14px;top:-2px;font-size:16px;color:#7a7466">综</div>
<div class="ab" style="left:36px;top:-2px;font-size:16px;color:#7a7466">日</div>
<div class="ab" style="left:58px;top:-2px;font-size:16px;color:#dfe6ee">周</div>
<div class="ab" style="left:80px;top:-2px;font-size:16px;color:#7a7466">月</div>
<div class="ab" style="left:103px;top:-2px;font-size:16px;color:#7a7466">季</div>
<div class="ab" style="left:125px;top:-2px;font-size:16px;color:#7a7466">年</div>
<div class="ab" style="left:147px;top:-2px;font-size:16px;color:#7a7466">市</div>
<div class="ab" style="left:168px;top:-2px;font-size:16px;color:#7a7466">M</div>
<div class="ab" style="left:190px;top:-2px;font-size:16px;color:#7a7466">备</div>
<div class="ab" style="left:213px;top:-2px;font-size:16px;color:#7a7466">帐</div>
<div class="ab" style="left:230px;top:-2px;font-size:16px;color:#7a7466">户</div>
<div class="ab" style="left:300px;top:-2px;font-size:16px;color:#7a7466">路</div>
<div class="ab" style="left:317px;top:-2px;font-size:16px;color:#7a7466">径</div>
</div>
<div class="ab" style="left:95px;top:-10px;font-size:13px;color:#e8d800">y24|/ j </div>
<div class="ab" style="left:949px;top:0;width:2px;height:5px;background:#1aa0e0"></div>
<div class="ab" style="left:11px;top:21px;width:1px;height:98px;background:#8a8c90"></div>
<div class="ab" style="left:11px;top:118px;width:947px;height:1px;background:#8a8c90"></div>
<div class="ab" style="left:7px;top:121px;font-size:9px;color:#9aa0a8">020.06.29</div>
<div class="ab" style="left:915px;top:121px;font-size:9px;color:#9aa0a8">2021.12.06</div>
<div class="ab" style="left:1008px;top:0;width:1px;height:467px;background:#8c9ab4"></div>
<div class="ab" style="left:1003px;top:16px;width:0;height:0;border-top:4px solid transparent;border-bottom:4px solid transparent;border-right:5px solid #b8bcc4"></div>
<div class="ab" style="left:5px;top:137px;font-size:21px;color:#a4a9b2;transform:scaleY(1);transform-origin:0 0">周</div>
<div class="ab" style="left:165px;top:137px;font-size:21px;color:#a4a9b2;transform:scaleY(1);transform-origin:0 0">手数</div>
<div class="ab" style="left:225px;top:137px;font-size:21px;color:#a4a9b2;transform:scaleY(1);transform-origin:0 0">最大手数</div>
<div class="ab" style="left:285px;top:137px;font-size:21px;color:#a4a9b2;transform:scaleY(1);transform-origin:0 0">单数</div>
<div class="ab" style="left:345px;top:137px;font-size:21px;color:#a4a9b2;transform:scaleY(1);transform-origin:0 0">盈亏金额</div>
<div class="ab" style="left:425px;top:137px;font-size:21px;color:#a4a9b2;transform:scaleY(1);transform-origin:0 0">百分比%</div>
<div class="ab" style="left:495px;top:137px;font-size:21px;color:#a4a9b2;transform:scaleY(1);transform-origin:0 0">出入金</div>
<div class="ab" style="left:565px;top:137px;font-size:21px;color:#a4a9b2;transform:scaleY(1);transform-origin:0 0">余额</div>
<div class="ab" style="left:655px;top:137px;font-size:21px;color:#a4a9b2;transform:scaleY(1);transform-origin:0 0">最大浮亏</div>
<div class="ab" style="left:745px;top:137px;font-size:21px;color:#a4a9b2;transform:scaleY(1);transform-origin:0 0">最大浮亏比例</div>
<div class="ab" style="left:825px;top:137px;font-size:21px;color:#a4a9b2;transform:scaleY(1);transform-origin:0 0">最大浮盈</div>
<div class="ab" style="left:915px;top:137px;font-size:21px;color:#a4a9b2;transform:scaleY(1);transform-origin:0 0">最大浮盈比</div>
<div class="ab" style="left:5px;top:149.5px;font-size:21px;color:#a4a9b2;transform:scaleY(1);transform-origin:0 0">持仓</div>
<div class="ab" style="left:165px;top:149.5px;font-size:21px;color:#00f060;transform:scaleY(1);transform-origin:0 0">0.50</div>
<div class="ab" style="left:225px;top:149.5px;font-size:21px;color:#00f060;transform:scaleY(1);transform-origin:0 0">0.20</div>
<div class="ab" style="left:285px;top:149.5px;font-size:21px;color:#00f060;transform:scaleY(1);transform-origin:0 0">3</div>
<div class="ab" style="left:345px;top:149.5px;font-size:21px;color:#00f060;transform:scaleY(1);transform-origin:0 0">-58.84</div>
<div class="ab" style="left:425px;top:149.5px;font-size:21px;color:#00f060;transform:scaleY(1);transform-origin:0 0">-0.68 %</div>
<div class="ab" style="left:495px;top:149.5px;font-size:21px;color:#b3c2de;transform:scaleY(1);transform-origin:0 0">0.00</div>
<div class="ab" style="left:565px;top:149.5px;font-size:21px;color:#b3c2de;transform:scaleY(1);transform-origin:0 0">8642.42</div>
<div class="ab" style="left:655px;top:149.5px;font-size:21px;color:#00f060;transform:scaleY(1);transform-origin:0 0">-60.28</div>
<div class="ab" style="left:745px;top:149.5px;font-size:21px;color:#00f060;transform:scaleY(1);transform-origin:0 0">-0.70 %</div>
<div class="ab" style="left:825px;top:149.5px;font-size:21px;color:#b3c2de;transform:scaleY(1);transform-origin:0 0">0.00</div>
<div class="ab" style="left:915px;top:149.5px;font-size:21px;color:#b3c2de;transform:scaleY(1);transform-origin:0 0">0.00 %</div>
<div class="ab" style="left:5px;top:164px;font-size:21px;color:#b3c2de;transform:scaleY(1);transform-origin:0 0">2021.12.06</div>
<div class="ab" style="left:117px;top:164px;font-size:21px;color:#b3c2de;transform:scaleY(1);transform-origin:0 0">~</div>
<div class="ab" style="left:136.5px;top:164px;font-size:21px;color:#b3c2de;transform:scaleY(1);transform-origin:0 0">2021.12.10</div>
<div class="ab" style="left:165px;top:164px;font-size:21px;color:#ff0000;transform:scaleY(1);transform-origin:0 0">0.12</div>
<div class="ab" style="left:225px;top:164px;font-size:21px;color:#ff0000;transform:scaleY(1);transform-origin:0 0">0.20</div>
<div class="ab" style="left:285px;top:164px;font-size:21px;color:#ff0000;transform:scaleY(1);transform-origin:0 0">1</div>
<div class="ab" style="left:345px;top:164px;font-size:21px;color:#ff0000;transform:scaleY(1);transform-origin:0 0">197.34</div>
<div class="ab" style="left:425px;top:164px;font-size:21px;color:#ff0000;transform:scaleY(1);transform-origin:0 0">2.34 %</div>
<div class="ab" style="left:495px;top:164px;font-size:21px;color:#b3c2de;transform:scaleY(1);transform-origin:0 0">0.00</div>
<div class="ab" style="left:565px;top:164px;font-size:21px;color:#b3c2de;transform:scaleY(1);transform-origin:0 0">8642.42</div>
<div class="ab" style="left:655px;top:164px;font-size:21px;color:#00f060;transform:scaleY(1);transform-origin:0 0">-62.26</div>
<div class="ab" style="left:745px;top:164px;font-size:21px;color:#00f060;transform:scaleY(1);transform-origin:0 0">-0.72 %</div>
<div class="ab" style="left:825px;top:164px;font-size:21px;color:#b3c2de;transform:scaleY(1);transform-origin:0 0">0</div>
<div class="ab" style="left:915px;top:164px;font-size:21px;color:#b3c2de;transform:scaleY(1);transform-origin:0 0">0.00 %</div>
<div class="ab" style="left:5px;top:178px;font-size:21px;color:#b3c2de;transform:scaleY(1);transform-origin:0 0">2021.11.29</div>
<div class="ab" style="left:117px;top:178px;font-size:21px;color:#b3c2de;transform:scaleY(1);transform-origin:0 0">~</div>
<div class="ab" style="left:136.5px;top:178px;font-size:21px;color:#b3c2de;transform:scaleY(1);transform-origin:0 0">2021.12.03</div>
<div class="ab" style="left:165px;top:178px;font-size:21px;color:#ff0000;transform:scaleY(1);transform-origin:0 0">0.12</div>
<div class="ab" style="left:225px;top:178px;font-size:21px;color:#ff0000;transform:scaleY(1);transform-origin:0 0">0.08</div>
<div class="ab" style="left:285px;top:178px;font-size:21px;color:#ff0000;transform:scaleY(1);transform-origin:0 0">4</div>
<div class="ab" style="left:345px;top:178px;font-size:21px;color:#ff0000;transform:scaleY(1);transform-origin:0 0">129.52</div>
<div class="ab" style="left:425px;top:178px;font-size:21px;color:#ff0000;transform:scaleY(1);transform-origin:0 0">1.56 %</div>
<div class="ab" style="left:495px;top:178px;font-size:21px;color:#b3c2de;transform:scaleY(1);transform-origin:0 0">0.00</div>
<div class="ab" style="left:565px;top:178px;font-size:21px;color:#b3c2de;transform:scaleY(1);transform-origin:0 0">8445.08</div>
<div class="ab" style="left:655px;top:178px;font-size:21px;color:#b3c2de;transform:scaleY(1);transform-origin:0 0">0.00</div>
<div class="ab" style="left:745px;top:178px;font-size:21px;color:#b3c2de;transform:scaleY(1);transform-origin:0 0">0.00 %</div>
<div class="ab" style="left:825px;top:178px;font-size:21px;color:#b3c2de;transform:scaleY(1);transform-origin:0 0">0</div>
<div class="ab" style="left:915px;top:178px;font-size:21px;color:#b3c2de;transform:scaleY(1);transform-origin:0 0">0.00 %</div>
<div class="ab" style="left:5px;top:192px;font-size:21px;color:#b3c2de;transform:scaleY(1);transform-origin:0 0">2021.11.22</div>
<div class="ab" style="left:117px;top:192px;font-size:21px;color:#b3c2de;transform:scaleY(1);transform-origin:0 0">~</div>
<div class="ab" style="left:136.5px;top:192px;font-size:21px;color:#b3c2de;transform:scaleY(1);transform-origin:0 0">2021.11.26</div>
<div class="ab" style="left:165px;top:192px;font-size:21px;color:#ff0000;transform:scaleY(1);transform-origin:0 0">0.46</div>
<div class="ab" style="left:225px;top:192px;font-size:21px;color:#ff0000;transform:scaleY(1);transform-origin:0 0">0.10</div>
<div class="ab" style="left:285px;top:192px;font-size:21px;color:#ff0000;transform:scaleY(1);transform-origin:0 0">5</div>
<div class="ab" style="left:345px;top:192px;font-size:21px;color:#ff0000;transform:scaleY(1);transform-origin:0 0">895.54</div>
<div class="ab" style="left:425px;top:192px;font-size:21px;color:#ff0000;transform:scaleY(1);transform-origin:0 0">12.07 %</div>
<div class="ab" style="left:495px;top:192px;font-size:21px;color:#b3c2de;transform:scaleY(1);transform-origin:0 0">0.00</div>
<div class="ab" style="left:565px;top:192px;font-size:21px;color:#b3c2de;transform:scaleY(1);transform-origin:0 0">8315.56</div>
<div class="ab" style="left:655px;top:192px;font-size:21px;color:#b3c2de;transform:scaleY(1);transform-origin:0 0">0.00</div>
<div class="ab" style="left:745px;top:192px;font-size:21px;color:#b3c2de;transform:scaleY(1);transform-origin:0 0">0.00 %</div>
<div class="ab" style="left:825px;top:192px;font-size:21px;color:#b3c2de;transform:scaleY(1);transform-origin:0 0">0</div>
<div class="ab" style="left:915px;top:192px;font-size:21px;color:#b3c2de;transform:scaleY(1);transform-origin:0 0">0.00 %</div>
<div class="ab" style="left:5px;top:206px;font-size:21px;color:#b3c2de;transform:scaleY(1);transform-origin:0 0">2021.11.01</div>
<div class="ab" style="left:117px;top:206px;font-size:21px;color:#b3c2de;transform:scaleY(1);transform-origin:0 0">~</div>
<div class="ab" style="left:136.5px;top:206px;font-size:21px;color:#b3c2de;transform:scaleY(1);transform-origin:0 0">2021.11.05</div>
<div class="ab" style="left:165px;top:206px;font-size:21px;color:#ff0000;transform:scaleY(1);transform-origin:0 0">0.80</div>
<div class="ab" style="left:225px;top:206px;font-size:21px;color:#ff0000;transform:scaleY(1);transform-origin:0 0">0.24</div>
<div class="ab" style="left:285px;top:206px;font-size:21px;color:#ff0000;transform:scaleY(1);transform-origin:0 0">6</div>
<div class="ab" style="left:345px;top:206px;font-size:21px;color:#ff0000;transform:scaleY(1);transform-origin:0 0">544.00</div>
<div class="ab" style="left:425px;top:206px;font-size:21px;color:#ff0000;transform:scaleY(1);transform-origin:0 0">7.91 %</div>
<div class="ab" style="left:495px;top:206px;font-size:21px;color:#00f060;transform:scaleY(1);transform-origin:0 0">-3000.00</div>
<div class="ab" style="left:565px;top:206px;font-size:21px;color:#b3c2de;transform:scaleY(1);transform-origin:0 0">8420.02</div>
<div class="ab" style="left:655px;top:206px;font-size:21px;color:#b3c2de;transform:scaleY(1);transform-origin:0 0">0.00</div>
<div class="ab" style="left:745px;top:206px;font-size:21px;color:#b3c2de;transform:scaleY(1);transform-origin:0 0">0.00 %</div>
<div class="ab" style="left:825px;top:206px;font-size:21px;color:#b3c2de;transform:scaleY(1);transform-origin:0 0">0</div>
<div class="ab" style="left:915px;top:206px;font-size:21px;color:#b3c2de;transform:scaleY(1);transform-origin:0 0">0.00 %</div>
<div class="ab" style="left:5px;top:220px;font-size:21px;color:#b3c2de;transform:scaleY(1);transform-origin:0 0">2021.10.18</div>
<div class="ab" style="left:117px;top:220px;font-size:21px;color:#b3c2de;transform:scaleY(1);transform-origin:0 0">~</div>
<div class="ab" style="left:136.5px;top:220px;font-size:21px;color:#b3c2de;transform:scaleY(1);transform-origin:0 0">2021.10.22</div>
<div class="ab" style="left:165px;top:220px;font-size:21px;color:#ff0000;transform:scaleY(1);transform-origin:0 0">1.50</div>
<div class="ab" style="left:225px;top:220px;font-size:21px;color:#ff0000;transform:scaleY(1);transform-origin:0 0">0.50</div>
<div class="ab" style="left:285px;top:220px;font-size:21px;color:#ff0000;transform:scaleY(1);transform-origin:0 0">3</div>
<div class="ab" style="left:345px;top:220px;font-size:21px;color:#ff0000;transform:scaleY(1);transform-origin:0 0">1868.47</div>
<div class="ab" style="left:425px;top:220px;font-size:21px;color:#ff0000;transform:scaleY(1);transform-origin:0 0">23.33 %</div>
<div class="ab" style="left:495px;top:220px;font-size:21px;color:#b3c2de;transform:scaleY(1);transform-origin:0 0">0.00</div>
<div class="ab" style="left:565px;top:220px;font-size:21px;color:#b3c2de;transform:scaleY(1);transform-origin:0 0">9876.02</div>
<div class="ab" style="left:655px;top:220px;font-size:21px;color:#b3c2de;transform:scaleY(1);transform-origin:0 0">0.00</div>
<div class="ab" style="left:745px;top:220px;font-size:21px;color:#b3c2de;transform:scaleY(1);transform-origin:0 0">0.00 %</div>
<div class="ab" style="left:825px;top:220px;font-size:21px;color:#b3c2de;transform:scaleY(1);transform-origin:0 0">0</div>
<div class="ab" style="left:915px;top:220px;font-size:21px;color:#b3c2de;transform:scaleY(1);transform-origin:0 0">0.00 %</div>
<div class="ab" style="left:5px;top:234px;font-size:21px;color:#b3c2de;transform:scaleY(1);transform-origin:0 0">2021.09.27</div>
<div class="ab" style="left:117px;top:234px;font-size:21px;color:#b3c2de;transform:scaleY(1);transform-origin:0 0">~</div>
<div class="ab" style="left:136.5px;top:234px;font-size:21px;color:#b3c2de;transform:scaleY(1);transform-origin:0 0">2021.10.01</div>
<div class="ab" style="left:165px;top:234px;font-size:21px;color:#ff0000;transform:scaleY(1);transform-origin:0 0">0.30</div>
<div class="ab" style="left:225px;top:234px;font-size:21px;color:#ff0000;transform:scaleY(1);transform-origin:0 0">0.10</div>
<div class="ab" style="left:285px;top:234px;font-size:21px;color:#ff0000;transform:scaleY(1);transform-origin:0 0">4</div>
<div class="ab" style="left:345px;top:234px;font-size:21px;color:#ff0000;transform:scaleY(1);transform-origin:0 0">287.71</div>
<div class="ab" style="left:425px;top:234px;font-size:21px;color:#ff0000;transform:scaleY(1);transform-origin:0 0">3.73 %</div>
<div class="ab" style="left:495px;top:234px;font-size:21px;color:#00f060;transform:scaleY(1);transform-origin:0 0">-5000.00</div>
<div class="ab" style="left:565px;top:234px;font-size:21px;color:#b3c2de;transform:scaleY(1);transform-origin:0 0">8007.55</div>
<div class="ab" style="left:655px;top:234px;font-size:21px;color:#b3c2de;transform:scaleY(1);transform-origin:0 0">0.00</div>
<div class="ab" style="left:745px;top:234px;font-size:21px;color:#b3c2de;transform:scaleY(1);transform-origin:0 0">0.00 %</div>
<div class="ab" style="left:825px;top:234px;font-size:21px;color:#b3c2de;transform:scaleY(1);transform-origin:0 0">0</div>
<div class="ab" style="left:915px;top:234px;font-size:21px;color:#b3c2de;transform:scaleY(1);transform-origin:0 0">0.00 %</div>
<div class="ab" style="left:5px;top:248px;font-size:21px;color:#b3c2de;transform:scaleY(1);transform-origin:0 0">2021.09.20</div>
<div class="ab" style="left:117px;top:248px;font-size:21px;color:#b3c2de;transform:scaleY(1);transform-origin:0 0">~</div>
<div class="ab" style="left:136.5px;top:248px;font-size:21px;color:#b3c2de;transform:scaleY(1);transform-origin:0 0">2021.09.24</div>
<div class="ab" style="left:165px;top:248px;font-size:21px;color:#ff0000;transform:scaleY(1);transform-origin:0 0">0.75</div>
<div class="ab" style="left:225px;top:248px;font-size:21px;color:#ff0000;transform:scaleY(1);transform-origin:0 0">0.10</div>
<div class="ab" style="left:285px;top:248px;font-size:21px;color:#ff0000;transform:scaleY(1);transform-origin:0 0">9</div>
<div class="ab" style="left:345px;top:248px;font-size:21px;color:#ff0000;transform:scaleY(1);transform-origin:0 0">1032.63</div>
<div class="ab" style="left:425px;top:248px;font-size:21px;color:#ff0000;transform:scaleY(1);transform-origin:0 0">8.84 %</div>
<div class="ab" style="left:495px;top:248px;font-size:21px;color:#b3c2de;transform:scaleY(1);transform-origin:0 0">0.00</div>
<div class="ab" style="left:565px;top:248px;font-size:21px;color:#b3c2de;transform:scaleY(1);transform-origin:0 0">12719.84</div>
<div class="ab" style="left:655px;top:248px;font-size:21px;color:#b3c2de;transform:scaleY(1);transform-origin:0 0">0.00</div>
<div class="ab" style="left:745px;top:248px;font-size:21px;color:#b3c2de;transform:scaleY(1);transform-origin:0 0">0.00 %</div>
<div class="ab" style="left:825px;top:248px;font-size:21px;color:#b3c2de;transform:scaleY(1);transform-origin:0 0">0</div>
<div class="ab" style="left:915px;top:248px;font-size:21px;color:#b3c2de;transform:scaleY(1);transform-origin:0 0">0.00 %</div>
<div class="ab" style="left:5px;top:262px;font-size:21px;color:#b3c2de;transform:scaleY(1);transform-origin:0 0">2021.08.30</div>
<div class="ab" style="left:117px;top:262px;font-size:21px;color:#b3c2de;transform:scaleY(1);transform-origin:0 0">~</div>
<div class="ab" style="left:136.5px;top:262px;font-size:21px;color:#b3c2de;transform:scaleY(1);transform-origin:0 0">2021.09.03</div>
<div class="ab" style="left:165px;top:262px;font-size:21px;color:#ff0000;transform:scaleY(1);transform-origin:0 0">0.50</div>
<div class="ab" style="left:225px;top:262px;font-size:21px;color:#ff0000;transform:scaleY(1);transform-origin:0 0">0.10</div>
<div class="ab" style="left:285px;top:262px;font-size:21px;color:#ff0000;transform:scaleY(1);transform-origin:0 0">8</div>
<div class="ab" style="left:345px;top:262px;font-size:21px;color:#ff0000;transform:scaleY(1);transform-origin:0 0">263.59</div>
<div class="ab" style="left:425px;top:262px;font-size:21px;color:#ff0000;transform:scaleY(1);transform-origin:0 0">2.31 %</div>
<div class="ab" style="left:495px;top:262px;font-size:21px;color:#b3c2de;transform:scaleY(1);transform-origin:0 0">0.00</div>
<div class="ab" style="left:565px;top:262px;font-size:21px;color:#b3c2de;transform:scaleY(1);transform-origin:0 0">11687.21</div>
<div class="ab" style="left:655px;top:262px;font-size:21px;color:#b3c2de;transform:scaleY(1);transform-origin:0 0">0.00</div>
<div class="ab" style="left:745px;top:262px;font-size:21px;color:#b3c2de;transform:scaleY(1);transform-origin:0 0">0.00 %</div>
<div class="ab" style="left:825px;top:262px;font-size:21px;color:#b3c2de;transform:scaleY(1);transform-origin:0 0">0</div>
<div class="ab" style="left:915px;top:262px;font-size:21px;color:#b3c2de;transform:scaleY(1);transform-origin:0 0">0.00 %</div>
<div class="ab" style="left:5px;top:276px;font-size:21px;color:#b3c2de;transform:scaleY(1);transform-origin:0 0">2021.08.23</div>
<div class="ab" style="left:117px;top:276px;font-size:21px;color:#b3c2de;transform:scaleY(1);transform-origin:0 0">~</div>
<div class="ab" style="left:136.5px;top:276px;font-size:21px;color:#b3c2de;transform:scaleY(1);transform-origin:0 0">2021.08.27</div>
<div class="ab" style="left:165px;top:276px;font-size:21px;color:#ff0000;transform:scaleY(1);transform-origin:0 0">0.70</div>
<div class="ab" style="left:225px;top:276px;font-size:21px;color:#ff0000;transform:scaleY(1);transform-origin:0 0">0.20</div>
<div class="ab" style="left:285px;top:276px;font-size:21px;color:#ff0000;transform:scaleY(1);transform-origin:0 0">10</div>
<div class="ab" style="left:345px;top:276px;font-size:21px;color:#ff0000;transform:scaleY(1);transform-origin:0 0">309.14</div>
<div class="ab" style="left:425px;top:276px;font-size:21px;color:#ff0000;transform:scaleY(1);transform-origin:0 0">2.78 %</div>
<div class="ab" style="left:495px;top:276px;font-size:21px;color:#b3c2de;transform:scaleY(1);transform-origin:0 0">0.00</div>
<div class="ab" style="left:565px;top:276px;font-size:21px;color:#b3c2de;transform:scaleY(1);transform-origin:0 0">11423.62</div>
<div class="ab" style="left:655px;top:276px;font-size:21px;color:#b3c2de;transform:scaleY(1);transform-origin:0 0">0.00</div>
<div class="ab" style="left:745px;top:276px;font-size:21px;color:#b3c2de;transform:scaleY(1);transform-origin:0 0">0.00 %</div>
<div class="ab" style="left:825px;top:276px;font-size:21px;color:#b3c2de;transform:scaleY(1);transform-origin:0 0">0</div>
<div class="ab" style="left:915px;top:276px;font-size:21px;color:#b3c2de;transform:scaleY(1);transform-origin:0 0">0.00 %</div>
<div class="ab" style="left:5px;top:290px;font-size:21px;color:#b3c2de;transform:scaleY(1);transform-origin:0 0">2021.08.16</div>
<div class="ab" style="left:117px;top:290px;font-size:21px;color:#b3c2de;transform:scaleY(1);transform-origin:0 0">~</div>
<div class="ab" style="left:136.5px;top:290px;font-size:21px;color:#b3c2de;transform:scaleY(1);transform-origin:0 0">2021.08.20</div>
<div class="ab" style="left:165px;top:290px;font-size:21px;color:#ff0000;transform:scaleY(1);transform-origin:0 0">0.80</div>
<div class="ab" style="left:225px;top:290px;font-size:21px;color:#ff0000;transform:scaleY(1);transform-origin:0 0">0.15</div>
<div class="ab" style="left:285px;top:290px;font-size:21px;color:#ff0000;transform:scaleY(1);transform-origin:0 0">9</div>
<div class="ab" style="left:345px;top:290px;font-size:21px;color:#ff0000;transform:scaleY(1);transform-origin:0 0">562.34</div>
<div class="ab" style="left:425px;top:290px;font-size:21px;color:#ff0000;transform:scaleY(1);transform-origin:0 0">5.33 %</div>
<div class="ab" style="left:495px;top:290px;font-size:21px;color:#b3c2de;transform:scaleY(1);transform-origin:0 0">0.00</div>
<div class="ab" style="left:565px;top:290px;font-size:21px;color:#b3c2de;transform:scaleY(1);transform-origin:0 0">11114.48</div>
<div class="ab" style="left:655px;top:290px;font-size:21px;color:#b3c2de;transform:scaleY(1);transform-origin:0 0">0.00</div>
<div class="ab" style="left:745px;top:290px;font-size:21px;color:#b3c2de;transform:scaleY(1);transform-origin:0 0">0.00 %</div>
<div class="ab" style="left:825px;top:290px;font-size:21px;color:#b3c2de;transform:scaleY(1);transform-origin:0 0">0</div>
<div class="ab" style="left:915px;top:290px;font-size:21px;color:#b3c2de;transform:scaleY(1);transform-origin:0 0">0.00 %</div>
<div class="ab" style="left:5px;top:304px;font-size:21px;color:#b3c2de;transform:scaleY(1);transform-origin:0 0">2021.07.19</div>
<div class="ab" style="left:117px;top:304px;font-size:21px;color:#b3c2de;transform:scaleY(1);transform-origin:0 0">~</div>
<div class="ab" style="left:136.5px;top:304px;font-size:21px;color:#b3c2de;transform:scaleY(1);transform-origin:0 0">2021.07.23</div>
<div class="ab" style="left:165px;top:304px;font-size:21px;color:#ff0000;transform:scaleY(1);transform-origin:0 0">1.00</div>
<div class="ab" style="left:225px;top:304px;font-size:21px;color:#ff0000;transform:scaleY(1);transform-origin:0 0">0.10</div>
<div class="ab" style="left:285px;top:304px;font-size:21px;color:#ff0000;transform:scaleY(1);transform-origin:0 0">15</div>
<div class="ab" style="left:345px;top:304px;font-size:21px;color:#ff0000;transform:scaleY(1);transform-origin:0 0">1030.12</div>
<div class="ab" style="left:425px;top:304px;font-size:21px;color:#ff0000;transform:scaleY(1);transform-origin:0 0">10.82 %</div>
<div class="ab" style="left:495px;top:304px;font-size:21px;color:#b3c2de;transform:scaleY(1);transform-origin:0 0">0.00</div>
<div class="ab" style="left:565px;top:304px;font-size:21px;color:#b3c2de;transform:scaleY(1);transform-origin:0 0">10552.14</div>
<div class="ab" style="left:655px;top:304px;font-size:21px;color:#b3c2de;transform:scaleY(1);transform-origin:0 0">0.00</div>
<div class="ab" style="left:745px;top:304px;font-size:21px;color:#b3c2de;transform:scaleY(1);transform-origin:0 0">0.00 %</div>
<div class="ab" style="left:825px;top:304px;font-size:21px;color:#b3c2de;transform:scaleY(1);transform-origin:0 0">0</div>
<div class="ab" style="left:915px;top:304px;font-size:21px;color:#b3c2de;transform:scaleY(1);transform-origin:0 0">0.00 %</div>
<div class="ab" style="left:5px;top:318px;font-size:21px;color:#b3c2de;transform:scaleY(1);transform-origin:0 0">2021.07.12</div>
<div class="ab" style="left:117px;top:318px;font-size:21px;color:#b3c2de;transform:scaleY(1);transform-origin:0 0">~</div>
<div class="ab" style="left:136.5px;top:318px;font-size:21px;color:#b3c2de;transform:scaleY(1);transform-origin:0 0">2021.07.16</div>
<div class="ab" style="left:165px;top:318px;font-size:21px;color:#00f060;transform:scaleY(1);transform-origin:0 0">0.61</div>
<div class="ab" style="left:225px;top:318px;font-size:21px;color:#00f060;transform:scaleY(1);transform-origin:0 0">0.10</div>
<div class="ab" style="left:285px;top:318px;font-size:21px;color:#00f060;transform:scaleY(1);transform-origin:0 0">10</div>
<div class="ab" style="left:345px;top:318px;font-size:21px;color:#00f060;transform:scaleY(1);transform-origin:0 0">-122.88</div>
<div class="ab" style="left:425px;top:318px;font-size:21px;color:#00f060;transform:scaleY(1);transform-origin:0 0">-1.27 %</div>
<div class="ab" style="left:495px;top:318px;font-size:21px;color:#b3c2de;transform:scaleY(1);transform-origin:0 0">0.00</div>
<div class="ab" style="left:565px;top:318px;font-size:21px;color:#b3c2de;transform:scaleY(1);transform-origin:0 0">9522.02</div>
<div class="ab" style="left:655px;top:318px;font-size:21px;color:#b3c2de;transform:scaleY(1);transform-origin:0 0">0.00</div>
<div class="ab" style="left:745px;top:318px;font-size:21px;color:#b3c2de;transform:scaleY(1);transform-origin:0 0">0.00 %</div>
<div class="ab" style="left:825px;top:318px;font-size:21px;color:#b3c2de;transform:scaleY(1);transform-origin:0 0">0</div>
<div class="ab" style="left:915px;top:318px;font-size:21px;color:#b3c2de;transform:scaleY(1);transform-origin:0 0">0.00 %</div>
<div class="ab" style="left:5px;top:332px;font-size:21px;color:#b3c2de;transform:scaleY(1);transform-origin:0 0">2021.07.05</div>
<div class="ab" style="left:117px;top:332px;font-size:21px;color:#b3c2de;transform:scaleY(1);transform-origin:0 0">~</div>
<div class="ab" style="left:136.5px;top:332px;font-size:21px;color:#b3c2de;transform:scaleY(1);transform-origin:0 0">2021.07.09</div>
<div class="ab" style="left:165px;top:332px;font-size:21px;color:#ff0000;transform:scaleY(1);transform-origin:0 0">0.97</div>
<div class="ab" style="left:225px;top:332px;font-size:21px;color:#ff0000;transform:scaleY(1);transform-origin:0 0">0.20</div>
<div class="ab" style="left:285px;top:332px;font-size:21px;color:#ff0000;transform:scaleY(1);transform-origin:0 0">14</div>
<div class="ab" style="left:345px;top:332px;font-size:21px;color:#ff0000;transform:scaleY(1);transform-origin:0 0">1495.69</div>
<div class="ab" style="left:425px;top:332px;font-size:21px;color:#ff0000;transform:scaleY(1);transform-origin:0 0">18.35 %</div>
<div class="ab" style="left:495px;top:332px;font-size:21px;color:#b3c2de;transform:scaleY(1);transform-origin:0 0">0.00</div>
<div class="ab" style="left:565px;top:332px;font-size:21px;color:#b3c2de;transform:scaleY(1);transform-origin:0 0">9644.90</div>
<div class="ab" style="left:655px;top:332px;font-size:21px;color:#b3c2de;transform:scaleY(1);transform-origin:0 0">0.00</div>
<div class="ab" style="left:745px;top:332px;font-size:21px;color:#b3c2de;transform:scaleY(1);transform-origin:0 0">0.00 %</div>
<div class="ab" style="left:825px;top:332px;font-size:21px;color:#b3c2de;transform:scaleY(1);transform-origin:0 0">0</div>
<div class="ab" style="left:915px;top:332px;font-size:21px;color:#b3c2de;transform:scaleY(1);transform-origin:0 0">0.00 %</div>
<div class="ab" style="left:5px;top:346px;font-size:21px;color:#b3c2de;transform:scaleY(1);transform-origin:0 0">2021.06.28</div>
<div class="ab" style="left:117px;top:346px;font-size:21px;color:#b3c2de;transform:scaleY(1);transform-origin:0 0">~</div>
<div class="ab" style="left:136.5px;top:346px;font-size:21px;color:#b3c2de;transform:scaleY(1);transform-origin:0 0">2021.07.02</div>
<div class="ab" style="left:165px;top:346px;font-size:21px;color:#ff0000;transform:scaleY(1);transform-origin:0 0">1.00</div>
<div class="ab" style="left:225px;top:346px;font-size:21px;color:#ff0000;transform:scaleY(1);transform-origin:0 0">0.10</div>
<div class="ab" style="left:285px;top:346px;font-size:21px;color:#ff0000;transform:scaleY(1);transform-origin:0 0">14</div>
<div class="ab" style="left:345px;top:346px;font-size:21px;color:#ff0000;transform:scaleY(1);transform-origin:0 0">473.28</div>
<div class="ab" style="left:425px;top:346px;font-size:21px;color:#ff0000;transform:scaleY(1);transform-origin:0 0">6.17 %</div>
<div class="ab" style="left:495px;top:346px;font-size:21px;color:#b3c2de;transform:scaleY(1);transform-origin:0 0">0.00</div>
<div class="ab" style="left:565px;top:346px;font-size:21px;color:#b3c2de;transform:scaleY(1);transform-origin:0 0">8149.21</div>
<div class="ab" style="left:655px;top:346px;font-size:21px;color:#b3c2de;transform:scaleY(1);transform-origin:0 0">0.00</div>
<div class="ab" style="left:745px;top:346px;font-size:21px;color:#b3c2de;transform:scaleY(1);transform-origin:0 0">0.00 %</div>
<div class="ab" style="left:825px;top:346px;font-size:21px;color:#b3c2de;transform:scaleY(1);transform-origin:0 0">0</div>
<div class="ab" style="left:915px;top:346px;font-size:21px;color:#b3c2de;transform:scaleY(1);transform-origin:0 0">0.00 %</div>
<div class="ab" style="left:5px;top:360px;font-size:21px;color:#b3c2de;transform:scaleY(1);transform-origin:0 0">2021.06.21</div>
<div class="ab" style="left:117px;top:360px;font-size:21px;color:#b3c2de;transform:scaleY(1);transform-origin:0 0">~</div>
<div class="ab" style="left:136.5px;top:360px;font-size:21px;color:#b3c2de;transform:scaleY(1);transform-origin:0 0">2021.06.25</div>
<div class="ab" style="left:165px;top:360px;font-size:21px;color:#b3c2de;transform:scaleY(1);transform-origin:0 0">0.00</div>
<div class="ab" style="left:225px;top:360px;font-size:21px;color:#b3c2de;transform:scaleY(1);transform-origin:0 0">0.00</div>
<div class="ab" style="left:285px;top:360px;font-size:21px;color:#b3c2de;transform:scaleY(1);transform-origin:0 0">0</div>
<div class="ab" style="left:345px;top:360px;font-size:21px;color:#b3c2de;transform:scaleY(1);transform-origin:0 0">0.00</div>
<div class="ab" style="left:425px;top:360px;font-size:21px;color:#b3c2de;transform:scaleY(1);transform-origin:0 0">0.00 %</div>
<div class="ab" style="left:495px;top:360px;font-size:21px;color:#00f060;transform:scaleY(1);transform-origin:0 0">-4000.00</div>
<div class="ab" style="left:565px;top:360px;font-size:21px;color:#b3c2de;transform:scaleY(1);transform-origin:0 0">7675.93</div>
<div class="ab" style="left:655px;top:360px;font-size:21px;color:#b3c2de;transform:scaleY(1);transform-origin:0 0">0.00</div>
<div class="ab" style="left:745px;top:360px;font-size:21px;color:#b3c2de;transform:scaleY(1);transform-origin:0 0">0.00 %</div>
<div class="ab" style="left:825px;top:360px;font-size:21px;color:#b3c2de;transform:scaleY(1);transform-origin:0 0">0</div>
<div class="ab" style="left:915px;top:360px;font-size:21px;color:#b3c2de;transform:scaleY(1);transform-origin:0 0">0.00 %</div>
<div class="ab" style="left:5px;top:374px;font-size:21px;color:#b3c2de;transform:scaleY(1);transform-origin:0 0">2021.06.14</div>
<div class="ab" style="left:117px;top:374px;font-size:21px;color:#b3c2de;transform:scaleY(1);transform-origin:0 0">~</div>
<div class="ab" style="left:136.5px;top:374px;font-size:21px;color:#b3c2de;transform:scaleY(1);transform-origin:0 0">2021.06.18</div>
<div class="ab" style="left:165px;top:374px;font-size:21px;color:#ff0000;transform:scaleY(1);transform-origin:0 0">1.80</div>
<div class="ab" style="left:225px;top:374px;font-size:21px;color:#ff0000;transform:scaleY(1);transform-origin:0 0">0.20</div>
<div class="ab" style="left:285px;top:374px;font-size:21px;color:#ff0000;transform:scaleY(1);transform-origin:0 0">20</div>
<div class="ab" style="left:345px;top:374px;font-size:21px;color:#ff0000;transform:scaleY(1);transform-origin:0 0">2623.15</div>
<div class="ab" style="left:425px;top:374px;font-size:21px;color:#ff0000;transform:scaleY(1);transform-origin:0 0">28.98 %</div>
<div class="ab" style="left:495px;top:374px;font-size:21px;color:#b3c2de;transform:scaleY(1);transform-origin:0 0">0.00</div>
<div class="ab" style="left:565px;top:374px;font-size:21px;color:#b3c2de;transform:scaleY(1);transform-origin:0 0">11675.93</div>
<div class="ab" style="left:655px;top:374px;font-size:21px;color:#b3c2de;transform:scaleY(1);transform-origin:0 0">0.00</div>
<div class="ab" style="left:745px;top:374px;font-size:21px;color:#b3c2de;transform:scaleY(1);transform-origin:0 0">0.00 %</div>
<div class="ab" style="left:825px;top:374px;font-size:21px;color:#b3c2de;transform:scaleY(1);transform-origin:0 0">0</div>
<div class="ab" style="left:915px;top:374px;font-size:21px;color:#b3c2de;transform:scaleY(1);transform-origin:0 0">0.00 %</div>
<div class="ab" style="left:5px;top:388px;font-size:21px;color:#b3c2de;transform:scaleY(1);transform-origin:0 0">2021.05.10</div>
<div class="ab" style="left:117px;top:388px;font-size:21px;color:#b3c2de;transform:scaleY(1);transform-origin:0 0">~</div>
<div class="ab" style="left:136.5px;top:388px;font-size:21px;color:#b3c2de;transform:scaleY(1);transform-origin:0 0">2021.05.14</div>
<div class="ab" style="left:165px;top:388px;font-size:21px;color:#ff0000;transform:scaleY(1);transform-origin:0 0">0.80</div>
<div class="ab" style="left:225px;top:388px;font-size:21px;color:#ff0000;transform:scaleY(1);transform-origin:0 0">0.20</div>
<div class="ab" style="left:285px;top:388px;font-size:21px;color:#ff0000;transform:scaleY(1);transform-origin:0 0">5</div>
<div class="ab" style="left:345px;top:388px;font-size:21px;color:#ff0000;transform:scaleY(1);transform-origin:0 0">104.06</div>
<div class="ab" style="left:425px;top:388px;font-size:21px;color:#ff0000;transform:scaleY(1);transform-origin:0 0">1.16 %</div>
<div class="ab" style="left:495px;top:388px;font-size:21px;color:#b3c2de;transform:scaleY(1);transform-origin:0 0">0.00</div>
<div class="ab" style="left:565px;top:388px;font-size:21px;color:#b3c2de;transform:scaleY(1);transform-origin:0 0">9052.78</div>
<div class="ab" style="left:655px;top:388px;font-size:21px;color:#b3c2de;transform:scaleY(1);transform-origin:0 0">0.00</div>
<div class="ab" style="left:745px;top:388px;font-size:21px;color:#b3c2de;transform:scaleY(1);transform-origin:0 0">0.00 %</div>
<div class="ab" style="left:825px;top:388px;font-size:21px;color:#b3c2de;transform:scaleY(1);transform-origin:0 0">0</div>
<div class="ab" style="left:915px;top:388px;font-size:21px;color:#b3c2de;transform:scaleY(1);transform-origin:0 0">0.00 %</div>
<div class="ab" style="left:5px;top:402px;font-size:21px;color:#b3c2de;transform:scaleY(1);transform-origin:0 0">2021.04.19</div>
<div class="ab" style="left:117px;top:402px;font-size:21px;color:#b3c2de;transform:scaleY(1);transform-origin:0 0">~</div>
<div class="ab" style="left:136.5px;top:402px;font-size:21px;color:#b3c2de;transform:scaleY(1);transform-origin:0 0">2021.04.23</div>
<div class="ab" style="left:165px;top:402px;font-size:21px;color:#ff0000;transform:scaleY(1);transform-origin:0 0">0.10</div>
<div class="ab" style="left:225px;top:402px;font-size:21px;color:#ff0000;transform:scaleY(1);transform-origin:0 0">0.05</div>
<div class="ab" style="left:285px;top:402px;font-size:21px;color:#ff0000;transform:scaleY(1);transform-origin:0 0">2</div>
<div class="ab" style="left:345px;top:402px;font-size:21px;color:#ff0000;transform:scaleY(1);transform-origin:0 0">1.26</div>
<div class="ab" style="left:425px;top:402px;font-size:21px;color:#ff0000;transform:scaleY(1);transform-origin:0 0">0.01 %</div>
<div class="ab" style="left:495px;top:402px;font-size:21px;color:#b3c2de;transform:scaleY(1);transform-origin:0 0">0.00</div>
<div class="ab" style="left:565px;top:402px;font-size:21px;color:#b3c2de;transform:scaleY(1);transform-origin:0 0">8948.72</div>
<div class="ab" style="left:655px;top:402px;font-size:21px;color:#b3c2de;transform:scaleY(1);transform-origin:0 0">0.00</div>
<div class="ab" style="left:745px;top:402px;font-size:21px;color:#b3c2de;transform:scaleY(1);transform-origin:0 0">0.00 %</div>
<div class="ab" style="left:825px;top:402px;font-size:21px;color:#b3c2de;transform:scaleY(1);transform-origin:0 0">0</div>
<div class="ab" style="left:915px;top:402px;font-size:21px;color:#b3c2de;transform:scaleY(1);transform-origin:0 0">0.00 %</div>
<div class="ab" style="left:5px;top:416px;font-size:21px;color:#b3c2de;transform:scaleY(1);transform-origin:0 0">2021.04.12</div>
<div class="ab" style="left:117px;top:416px;font-size:21px;color:#b3c2de;transform:scaleY(1);transform-origin:0 0">~</div>
<div class="ab" style="left:136.5px;top:416px;font-size:21px;color:#b3c2de;transform:scaleY(1);transform-origin:0 0">2021.04.16</div>
<div class="ab" style="left:165px;top:416px;font-size:21px;color:#ff0000;transform:scaleY(1);transform-origin:0 0">0.24</div>
<div class="ab" style="left:225px;top:416px;font-size:21px;color:#ff0000;transform:scaleY(1);transform-origin:0 0">0.20</div>
<div class="ab" style="left:285px;top:416px;font-size:21px;color:#ff0000;transform:scaleY(1);transform-origin:0 0">3</div>
<div class="ab" style="left:345px;top:416px;font-size:21px;color:#ff0000;transform:scaleY(1);transform-origin:0 0">49.71</div>
<div class="ab" style="left:425px;top:416px;font-size:21px;color:#ff0000;transform:scaleY(1);transform-origin:0 0">0.56 %</div>
<div class="ab" style="left:495px;top:416px;font-size:21px;color:#b3c2de;transform:scaleY(1);transform-origin:0 0">0.00</div>
<div class="ab" style="left:565px;top:416px;font-size:21px;color:#b3c2de;transform:scaleY(1);transform-origin:0 0">8947.46</div>
<div class="ab" style="left:655px;top:416px;font-size:21px;color:#b3c2de;transform:scaleY(1);transform-origin:0 0">0.00</div>
<div class="ab" style="left:745px;top:416px;font-size:21px;color:#b3c2de;transform:scaleY(1);transform-origin:0 0">0.00 %</div>
<div class="ab" style="left:825px;top:416px;font-size:21px;color:#b3c2de;transform:scaleY(1);transform-origin:0 0">0</div>
<div class="ab" style="left:915px;top:416px;font-size:21px;color:#b3c2de;transform:scaleY(1);transform-origin:0 0">0.00 %</div>
<div class="ab" style="left:5px;top:430px;font-size:21px;color:#b3c2de;transform:scaleY(1);transform-origin:0 0">2021.03.22</div>
<div class="ab" style="left:117px;top:430px;font-size:21px;color:#b3c2de;transform:scaleY(1);transform-origin:0 0">~</div>
<div class="ab" style="left:136.5px;top:430px;font-size:21px;color:#b3c2de;transform:scaleY(1);transform-origin:0 0">2021.03.26</div>
<div class="ab" style="left:165px;top:430px;font-size:21px;color:#ff0000;transform:scaleY(1);transform-origin:0 0">0.29</div>
<div class="ab" style="left:225px;top:430px;font-size:21px;color:#ff0000;transform:scaleY(1);transform-origin:0 0">0.10</div>
<div class="ab" style="left:285px;top:430px;font-size:21px;color:#ff0000;transform:scaleY(1);transform-origin:0 0">5</div>
<div class="ab" style="left:345px;top:430px;font-size:21px;color:#ff0000;transform:scaleY(1);transform-origin:0 0">207.99</div>
<div class="ab" style="left:425px;top:430px;font-size:21px;color:#ff0000;transform:scaleY(1);transform-origin:0 0">2.39 %</div>
<div class="ab" style="left:495px;top:430px;font-size:21px;color:#b3c2de;transform:scaleY(1);transform-origin:0 0">0.00</div>
<div class="ab" style="left:565px;top:430px;font-size:21px;color:#b3c2de;transform:scaleY(1);transform-origin:0 0">8897.75</div>
<div class="ab" style="left:655px;top:430px;font-size:21px;color:#b3c2de;transform:scaleY(1);transform-origin:0 0">0.00</div>
<div class="ab" style="left:745px;top:430px;font-size:21px;color:#b3c2de;transform:scaleY(1);transform-origin:0 0">0.00 %</div>
<div class="ab" style="left:825px;top:430px;font-size:21px;color:#b3c2de;transform:scaleY(1);transform-origin:0 0">0</div>
<div class="ab" style="left:915px;top:430px;font-size:21px;color:#b3c2de;transform:scaleY(1);transform-origin:0 0">0.00 %</div>
<div class="ab" style="left:5px;top:444px;font-size:21px;color:#b3c2de;transform:scaleY(1);transform-origin:0 0">2021.03.15</div>
<div class="ab" style="left:117px;top:444px;font-size:21px;color:#b3c2de;transform:scaleY(1);transform-origin:0 0">~</div>
<div class="ab" style="left:136.5px;top:444px;font-size:21px;color:#b3c2de;transform:scaleY(1);transform-origin:0 0">2021.03.19</div>
<div class="ab" style="left:165px;top:444px;font-size:21px;color:#ff0000;transform:scaleY(1);transform-origin:0 0">0.30</div>
<div class="ab" style="left:225px;top:444px;font-size:21px;color:#ff0000;transform:scaleY(1);transform-origin:0 0">0.10</div>
<div class="ab" style="left:285px;top:444px;font-size:21px;color:#ff0000;transform:scaleY(1);transform-origin:0 0">4</div>
<div class="ab" style="left:345px;top:444px;font-size:21px;color:#ff0000;transform:scaleY(1);transform-origin:0 0">136.79</div>
<div class="ab" style="left:425px;top:444px;font-size:21px;color:#ff0000;transform:scaleY(1);transform-origin:0 0">1.60 %</div>
<div class="ab" style="left:495px;top:444px;font-size:21px;color:#b3c2de;transform:scaleY(1);transform-origin:0 0">0.00</div>
<div class="ab" style="left:565px;top:444px;font-size:21px;color:#b3c2de;transform:scaleY(1);transform-origin:0 0">8689.76</div>
<div class="ab" style="left:655px;top:444px;font-size:21px;color:#b3c2de;transform:scaleY(1);transform-origin:0 0">0.00</div>
<div class="ab" style="left:745px;top:444px;font-size:21px;color:#b3c2de;transform:scaleY(1);transform-origin:0 0">0.00 %</div>
<div class="ab" style="left:825px;top:444px;font-size:21px;color:#b3c2de;transform:scaleY(1);transform-origin:0 0">0</div>
<div class="ab" style="left:915px;top:444px;font-size:21px;color:#b3c2de;transform:scaleY(1);transform-origin:0 0">0.00 %</div>
<div class="ab" style="left:5px;top:458px;font-size:21px;color:#b3c2de;transform:scaleY(1);transform-origin:0 0">2021.03.08</div>
<div class="ab" style="left:117px;top:458px;font-size:21px;color:#b3c2de;transform:scaleY(1);transform-origin:0 0">~</div>
<div class="ab" style="left:136.5px;top:458px;font-size:21px;color:#b3c2de;transform:scaleY(1);transform-origin:0 0">2021.03.12</div>
<div class="ab" style="left:165px;top:458px;font-size:21px;color:#ff0000;transform:scaleY(1);transform-origin:0 0">0.30</div>
<div class="ab" style="left:225px;top:458px;font-size:21px;color:#ff0000;transform:scaleY(1);transform-origin:0 0">0.20</div>
<div class="ab" style="left:285px;top:458px;font-size:21px;color:#ff0000;transform:scaleY(1);transform-origin:0 0">4</div>
<div class="ab" style="left:345px;top:458px;font-size:21px;color:#ff0000;transform:scaleY(1);transform-origin:0 0">18.22</div>
<div class="ab" style="left:425px;top:458px;font-size:21px;color:#ff0000;transform:scaleY(1);transform-origin:0 0">0.58 %</div>
<div class="ab" style="left:495px;top:458px;font-size:21px;color:#b3c2de;transform:scaleY(1);transform-origin:0 0">0.00</div>
<div class="ab" style="left:565px;top:458px;font-size:21px;color:#b3c2de;transform:scaleY(1);transform-origin:0 0">8552.97</div>
<div class="ab" style="left:655px;top:458px;font-size:21px;color:#b3c2de;transform:scaleY(1);transform-origin:0 0">0.00</div>
<div class="ab" style="left:745px;top:458px;font-size:21px;color:#b3c2de;transform:scaleY(1);transform-origin:0 0">0.00 %</div>
<div class="ab" style="left:825px;top:458px;font-size:21px;color:#b3c2de;transform:scaleY(1);transform-origin:0 0">0</div>
<div class="ab" style="left:915px;top:458px;font-size:21px;color:#b3c2de;transform:scaleY(1);transform-origin:0 0">0.00 %</div>
<svg class="ab" style="left:0;top:0" width="1009" height="140"><polyline points="11,114.3 51,106.8 65,106 96,105.8 117,119 127,118.5 138,118 158.5,104.9 204.70000000000005,104.9 216.60000000000002,103 239,99.7 254,98.6 290,99 308,96 325,91.7 351,91.7 366,88.8 459,78 484,75.6 525,75.4 547,74.1 621,74.1 641,62.1 668,61.5 685,59.6 703.4000000000001,53 728,53 745,49 762.7,47.2 799,44.7 846,40.3 853,39.6 871.7,30.8 890,28.3 912.7,22.6 946,22 958,21.6" fill="none" stroke="#00b8f0" stroke-width="2.2"/></svg>
</div>
<div id="ax">
<div class="ab" style="left:0;top:0;width:1744px;height:1px;background:#00f4ff"></div>
<div class="ab" style="left:-28px;top:8px;font-size:18px;letter-spacing:0.3px;-webkit-text-stroke:0.35px #00f0ff;color:#00f0ff">25 Nov 2021</div>
<div class="ab" style="left:100px;top:0;width:1px;height:4px;background:#00f4ff"></div>
<div class="ab" style="left:100px;top:8px;font-size:18px;letter-spacing:0.3px;-webkit-text-stroke:0.35px #00f0ff;color:#00f0ff">26 Nov 12:00</div>
<div class="ab" style="left:228px;top:0;width:1px;height:4px;background:#00f4ff"></div>
<div class="ab" style="left:228px;top:8px;font-size:18px;letter-spacing:0.3px;-webkit-text-stroke:0.35px #00f0ff;color:#00f0ff">29 Nov 08:00</div>
<div class="ab" style="left:356px;top:0;width:1px;height:4px;background:#00f4ff"></div>
<div class="ab" style="left:356px;top:8px;font-size:18px;letter-spacing:0.3px;-webkit-text-stroke:0.35px #00f0ff;color:#00f0ff">30 Nov 01:00</div>
<div class="ab" style="left:484px;top:0;width:1px;height:4px;background:#00f4ff"></div>
<div class="ab" style="left:484px;top:8px;font-size:18px;letter-spacing:0.3px;-webkit-text-stroke:0.35px #00f0ff;color:#00f0ff">30 Nov 17:00</div>
<div class="ab" style="left:612px;top:0;width:1px;height:4px;background:#00f4ff"></div>
<div class="ab" style="left:612px;top:8px;font-size:18px;letter-spacing:0.3px;-webkit-text-stroke:0.35px #00f0ff;color:#00f0ff">1 Dec 10:00</div>
<div class="ab" style="left:740px;top:0;width:1px;height:4px;background:#00f4ff"></div>
<div class="ab" style="left:740px;top:8px;font-size:18px;letter-spacing:0.3px;-webkit-text-stroke:0.35px #00f0ff;color:#00f0ff">2 Dec 03:00</div>
<div class="ab" style="left:868px;top:0;width:1px;height:4px;background:#00f4ff"></div>
<div class="ab" style="left:868px;top:8px;font-size:18px;letter-spacing:0.3px;-webkit-text-stroke:0.35px #00f0ff;color:#00f0ff">2 Dec 19:00</div>
<div class="ab" style="left:996px;top:0;width:1px;height:4px;background:#00f4ff"></div>
<div class="ab" style="left:996px;top:8px;font-size:18px;letter-spacing:0.3px;-webkit-text-stroke:0.35px #00f0ff;color:#00f0ff">3 Dec 12:00</div>
<div class="ab" style="left:1124px;top:0;width:1px;height:4px;background:#00f4ff"></div>
<div class="ab" style="left:1124px;top:8px;font-size:18px;letter-spacing:0.3px;-webkit-text-stroke:0.35px #00f0ff;color:#00f0ff">6 Dec 05:00</div>
<div class="ab" style="left:1252px;top:0;width:1px;height:4px;background:#00f4ff"></div>
<div class="ab" style="left:1252px;top:8px;font-size:18px;letter-spacing:0.3px;-webkit-text-stroke:0.35px #00f0ff;color:#00f0ff">6 Dec 21:00</div>
<div class="ab" style="left:1380px;top:0;width:1px;height:4px;background:#00f4ff"></div>
<div class="ab" style="left:1380px;top:8px;font-size:18px;letter-spacing:0.3px;-webkit-text-stroke:0.35px #00f0ff;color:#00f0ff">7 Dec 14:00</div>
<div class="ab" style="left:1508px;top:0;width:1px;height:4px;background:#00f4ff"></div>
<div class="ab" style="left:1508px;top:8px;font-size:18px;letter-spacing:0.3px;-webkit-text-stroke:0.35px #00f0ff;color:#00f0ff">8 Dec 07:00</div>
<div class="ab" style="left:1636px;top:0;width:1px;height:4px;background:#00f4ff"></div>
<div class="ab" style="left:1636px;top:8px;font-size:18px;letter-spacing:0.3px;-webkit-text-stroke:0.35px #00f0ff;color:#00f0ff">8 Dec 23:00</div>
</div>
<div id="bt">
<div class="ab" style="left:0;top:0;width:1744px;height:10px;background:#f0f0f0"></div>
<div class="ab" style="left:0;top:10px;width:1744px;height:1px;background:#a0a0a0"></div>
<div class="ab" style="left:0;top:50px;width:1744px;height:1px;background:#d6d6d6"></div>
<div class="ab" style="left:220px;top:11px;width:1px;height:39px;background:#e3e3e3"></div>
<div class="ab" style="left:594px;top:11px;width:1px;height:39px;background:#e3e3e3"></div>
<div class="ab" style="left:764px;top:11px;width:1px;height:39px;background:#e3e3e3"></div>
<div class="ab" style="left:900px;top:11px;width:1px;height:39px;background:#e3e3e3"></div>
<div class="ab" style="left:1070px;top:11px;width:1px;height:39px;background:#e3e3e3"></div>
<div class="ab" style="left:1240px;top:11px;width:1px;height:39px;background:#e3e3e3"></div>
<div class="ab" style="left:1410px;top:11px;width:1px;height:39px;background:#e3e3e3"></div>
<div class="ab" style="left:1580px;top:11px;width:1px;height:39px;background:#e3e3e3"></div>
<div class="ab" style="left:6px;top:20px;font-size:24px;color:#000">订单</div>
<div class="ab" style="right:1156px;top:20px;font-size:24px;color:#000">时间</div>
<div class="ab" style="right:986px;top:20px;font-size:24px;color:#000">类型</div>
<div class="ab" style="right:850px;top:20px;font-size:24px;color:#000">手数</div>
<div class="ab" style="right:680px;top:20px;font-size:24px;color:#000">交易品种</div>
<div class="ab" style="right:510px;top:20px;font-size:24px;color:#000">价格</div>
<div class="ab" style="right:340px;top:20px;font-size:24px;color:#000">止损</div>
<div class="ab" style="right:170px;top:20px;font-size:24px;color:#000">止盈</div>
<div class="ab" style="left:66px;top:27px;width:1px;height:7px;background:#888;transform:rotate(20deg)"></div>
<div class="ab" style="left:0;top:51px;width:1744px;height:38px;background:#ffffff"></div>
<div class="ab" style="left:0;top:89px;width:1744px;height:1px;background:#d4d4d4"></div>
<div class="ab" style="left:219px;top:51px;width:1px;height:38px;background:#d4d4d4"></div>
<div class="ab" style="left:593px;top:51px;width:1px;height:38px;background:#d4d4d4"></div>
<div class="ab" style="left:763px;top:51px;width:1px;height:38px;background:#d4d4d4"></div>
<div class="ab" style="left:40px;top:58px;font-size:24.6px;color:#000;transform:scaleY(1.06);transform-origin:0 0">79205443</div>
<div class="ab" style="right:1158px;top:58px;font-size:24.6px;color:#000;transform:scaleY(1.06);transform-origin:0 0">2020.05.29 17:57:28</div>
<div class="ab" style="right:988px;top:58px;font-size:24.6px;color:#000;transform:scaleY(1.06);transform-origin:0 0">balance</div>
<div class="ab" style="left:6px;top:57px;width:22px;height:26px;border:1px solid #7a7a7a;border-radius:3px;background:linear-gradient(#fdfdfd,#e4e4e4);box-shadow:1px 1px 1px #999"></div>
<svg class="ab" style="left:8px;top:60px" width="18" height="20" viewBox="0 0 18 20"><path d="M9 2.5 L16 10 L12 10 L12 17.5 L6 17.5 L6 10 L2 10 Z" fill="#22b02c" stroke="#0c7a14" stroke-width="0.8"/></svg>
<div class="ab" style="left:0;top:90px;width:1744px;height:38px;background:#ebebeb"></div>
<div class="ab" style="left:0;top:128px;width:1744px;height:1px;background:#d4d4d4"></div>
<div class="ab" style="left:219px;top:90px;width:1px;height:38px;background:#d4d4d4"></div>
<div class="ab" style="left:593px;top:90px;width:1px;height:38px;background:#d4d4d4"></div>
<div class="ab" style="left:763px;top:90px;width:1px;height:38px;background:#d4d4d4"></div>
<div class="ab" style="left:40px;top:97px;font-size:24.6px;color:#000;transform:scaleY(1.06);transform-origin:0 0">79205444</div>
<div class="ab" style="right:1158px;top:97px;font-size:24.6px;color:#000;transform:scaleY(1.06);transform-origin:0 0">2020.06.30 17:45:36</div>
<div class="ab" style="right:988px;top:97px;font-size:24.6px;color:#000;transform:scaleY(1.06);transform-origin:0 0">balance</div>
<div class="ab" style="left:6px;top:96px;width:22px;height:26px;border:1px solid #7a7a7a;border-radius:3px;background:linear-gradient(#fdfdfd,#e4e4e4);box-shadow:1px 1px 1px #999"></div>
<svg class="ab" style="left:8px;top:99px" width="18" height="20" viewBox="0 0 18 20"><path d="M9 17.5 L16 10 L12 10 L12 2.5 L6 2.5 L6 10 L2 10 Z" fill="#e8501c" stroke="#b03008" stroke-width="0.8"/></svg>
<div class="ab" style="left:0;top:129px;width:1744px;height:38px;background:#ffffff"></div>
<div class="ab" style="left:0;top:167px;width:1744px;height:1px;background:#d4d4d4"></div>
<div class="ab" style="left:219px;top:129px;width:1px;height:38px;background:#d4d4d4"></div>
<div class="ab" style="left:593px;top:129px;width:1px;height:38px;background:#d4d4d4"></div>
<div class="ab" style="left:763px;top:129px;width:1px;height:38px;background:#d4d4d4"></div>
<div class="ab" style="left:899px;top:129px;width:1px;height:38px;background:#d4d4d4"></div>
<div class="ab" style="left:1069px;top:129px;width:1px;height:38px;background:#d4d4d4"></div>
<div class="ab" style="left:1239px;top:129px;width:1px;height:38px;background:#d4d4d4"></div>
<div class="ab" style="left:1409px;top:129px;width:1px;height:38px;background:#d4d4d4"></div>
<div class="ab" style="left:1579px;top:129px;width:1px;height:38px;background:#d4d4d4"></div>
<div class="ab" style="left:40px;top:136px;font-size:24.6px;color:#000;transform:scaleY(1.06);transform-origin:0 0">79286308</div>
<div class="ab" style="right:1158px;top:136px;font-size:24.6px;color:#000;transform:scaleY(1.06);transform-origin:0 0">2021.11.03 17:07:50</div>
<div class="ab" style="right:988px;top:136px;font-size:24.6px;color:#000;transform:scaleY(1.06);transform-origin:0 0">sell</div>
<div class="ab" style="right:850px;top:136px;font-size:24.6px;color:#000;transform:scaleY(1.06);transform-origin:0 0">0.10</div>
<div class="ab" style="right:681px;top:136px;font-size:24.6px;color:#000;transform:scaleY(1.06);transform-origin:0 0">gbpjpy</div>
<div class="ab" style="right:511px;top:136px;font-size:24.6px;color:#000;transform:scaleY(1.06);transform-origin:0 0">155.547</div>
<div class="ab" style="right:341px;top:136px;font-size:24.6px;color:#000;transform:scaleY(1.06);transform-origin:0 0">0.000</div>
<div class="ab" style="right:171px;top:136px;font-size:24.6px;color:#000;transform:scaleY(1.06);transform-origin:0 0">0.000</div>
<div class="ab" style="left:1720px;top:136px;font-size:24.6px;color:#000;transform:scaleY(1.06);transform-origin:0 0">2021</div>
<svg class="ab" style="left:4px;top:133px" width="32" height="34" viewBox="0 0 32 34"><defs><linearGradient id="pg2" x1="0" y1="0" x2="1" y2="1"><stop offset="0" stop-color="#ffffff"/><stop offset="1" stop-color="#d8d8d8"/></linearGradient></defs><path d="M1 1.5 L17.5 1.5 L23.5 7.5 L23.5 28 L1 28 Z" fill="url(#pg2)" stroke="#6a6a6a" stroke-width="1.3" stroke-linejoin="round"/><path d="M17.5 1.5 L17.5 7.5 L23.5 7.5" fill="#eee" stroke="#6a6a6a" stroke-width="1.1"/><circle cx="21.8" cy="24" r="6.5" fill="#e5440f" stroke="#b8300a" stroke-width="0.6"/><circle cx="20" cy="22" r="2.2" fill="#ff9470" opacity="0.8"/></svg>
<div class="ab" style="left:0;top:168px;width:1744px;height:38px;background:#ebebeb"></div>
<div class="ab" style="left:0;top:206px;width:1744px;height:1px;background:#d4d4d4"></div>
<div class="ab" style="left:219px;top:168px;width:1px;height:38px;background:#d4d4d4"></div>
<div class="ab" style="left:593px;top:168px;width:1px;height:38px;background:#d4d4d4"></div>
<div class="ab" style="left:763px;top:168px;width:1px;height:38px;background:#d4d4d4"></div>
<div class="ab" style="left:40px;top:175px;font-size:24.6px;color:#000;transform:scaleY(1.06);transform-origin:0 0">79319899</div>
<div class="ab" style="right:1158px;top:175px;font-size:24.6px;color:#000;transform:scaleY(1.06);transform-origin:0 0">2021.11.05 06:28:43</div>
<div class="ab" style="right:988px;top:175px;font-size:24.6px;color:#000;transform:scaleY(1.06);transform-origin:0 0">balance</div>
<div class="ab" style="left:6px;top:174px;width:22px;height:26px;border:1px solid #7a7a7a;border-radius:3px;background:linear-gradient(#fdfdfd,#e4e4e4);box-shadow:1px 1px 1px #999"></div>
<svg class="ab" style="left:8px;top:177px" width="18" height="20" viewBox="0 0 18 20"><path d="M9 17.5 L16 10 L12 10 L12 2.5 L6 2.5 L6 10 L2 10 Z" fill="#e8501c" stroke="#b03008" stroke-width="0.8"/></svg>
<div class="ab" style="left:0;top:207px;width:1744px;height:38px;background:#ffffff"></div>
<div class="ab" style="left:0;top:245px;width:1744px;height:1px;background:#d4d4d4"></div>
<div class="ab" style="left:219px;top:207px;width:1px;height:38px;background:#d4d4d4"></div>
<div class="ab" style="left:593px;top:207px;width:1px;height:38px;background:#d4d4d4"></div>
<div class="ab" style="left:763px;top:207px;width:1px;height:38px;background:#d4d4d4"></div>
<div class="ab" style="left:899px;top:207px;width:1px;height:38px;background:#d4d4d4"></div>
<div class="ab" style="left:1069px;top:207px;width:1px;height:38px;background:#d4d4d4"></div>
<div class="ab" style="left:1239px;top:207px;width:1px;height:38px;background:#d4d4d4"></div>
<div class="ab" style="left:1409px;top:207px;width:1px;height:38px;background:#d4d4d4"></div>
<div class="ab" style="left:1579px;top:207px;width:1px;height:38px;background:#d4d4d4"></div>
<div class="ab" style="left:40px;top:214px;font-size:24.6px;color:#000;transform:scaleY(1.06);transform-origin:0 0">79439451</div>
<div class="ab" style="right:1158px;top:214px;font-size:24.6px;color:#000;transform:scaleY(1.06);transform-origin:0 0">2021.11.15 04:38:36</div>
<div class="ab" style="right:988px;top:214px;font-size:24.6px;color:#000;transform:scaleY(1.06);transform-origin:0 0">sell</div>
<div class="ab" style="right:850px;top:214px;font-size:24.6px;color:#000;transform:scaleY(1.06);transform-origin:0 0">0.10</div>
<div class="ab" style="right:681px;top:214px;font-size:24.6px;color:#000;transform:scaleY(1.06);transform-origin:0 0">xauusd</div>
<div class="ab" style="right:511px;top:214px;font-size:24.6px;color:#000;transform:scaleY(1.06);transform-origin:0 0">1859.43</div>
<div class="ab" style="right:341px;top:214px;font-size:24.6px;color:#000;transform:scaleY(1.06);transform-origin:0 0">0.00</div>
<div class="ab" style="right:171px;top:214px;font-size:24.6px;color:#000;transform:scaleY(1.06);transform-origin:0 0">0.00</div>
<div class="ab" style="left:1720px;top:214px;font-size:24.6px;color:#000;transform:scaleY(1.06);transform-origin:0 0">2021</div>
<svg class="ab" style="left:4px;top:211px" width="32" height="34" viewBox="0 0 32 34"><defs><linearGradient id="pg4" x1="0" y1="0" x2="1" y2="1"><stop offset="0" stop-color="#ffffff"/><stop offset="1" stop-color="#d8d8d8"/></linearGradient></defs><path d="M1 1.5 L17.5 1.5 L23.5 7.5 L23.5 28 L1 28 Z" fill="url(#pg4)" stroke="#6a6a6a" stroke-width="1.3" stroke-linejoin="round"/><path d="M17.5 1.5 L17.5 7.5 L23.5 7.5" fill="#eee" stroke="#6a6a6a" stroke-width="1.1"/><circle cx="21.8" cy="24" r="6.5" fill="#e5440f" stroke="#b8300a" stroke-width="0.6"/><circle cx="20" cy="22" r="2.2" fill="#ff9470" opacity="0.8"/></svg>
<div class="ab" style="left:0;top:246px;width:1744px;height:38px;background:#ebebeb"></div>
<div class="ab" style="left:0;top:284px;width:1744px;height:1px;background:#d4d4d4"></div>
<div class="ab" style="left:219px;top:246px;width:1px;height:38px;background:#d4d4d4"></div>
<div class="ab" style="left:593px;top:246px;width:1px;height:38px;background:#d4d4d4"></div>
<div class="ab" style="left:763px;top:246px;width:1px;height:38px;background:#d4d4d4"></div>
<div class="ab" style="left:899px;top:246px;width:1px;height:38px;background:#d4d4d4"></div>
<div class="ab" style="left:1069px;top:246px;width:1px;height:38px;background:#d4d4d4"></div>
<div class="ab" style="left:1239px;top:246px;width:1px;height:38px;background:#d4d4d4"></div>
<div class="ab" style="left:1409px;top:246px;width:1px;height:38px;background:#d4d4d4"></div>
<div class="ab" style="left:1579px;top:246px;width:1px;height:38px;background:#d4d4d4"></div>
<div class="ab" style="left:40px;top:253px;font-size:24.6px;color:#000;transform:scaleY(1.06);transform-origin:0 0">79471719</div>
<div class="ab" style="right:1158px;top:253px;font-size:24.6px;color:#000;transform:scaleY(1.06);transform-origin:0 0">2021.11.16 18:37:42</div>
<div class="ab" style="right:988px;top:253px;font-size:24.6px;color:#000;transform:scaleY(1.06);transform-origin:0 0">sell</div>
<div class="ab" style="right:850px;top:253px;font-size:24.6px;color:#000;transform:scaleY(1.06);transform-origin:0 0">0.10</div>
<div class="ab" style="right:681px;top:253px;font-size:24.6px;color:#000;transform:scaleY(1.06);transform-origin:0 0">xauusd</div>
<div class="ab" style="right:511px;top:253px;font-size:24.6px;color:#000;transform:scaleY(1.06);transform-origin:0 0">1854.76</div>
<div class="ab" style="right:341px;top:253px;font-size:24.6px;color:#000;transform:scaleY(1.06);transform-origin:0 0">0.00</div>
<div class="ab" style="right:171px;top:253px;font-size:24.6px;color:#000;transform:scaleY(1.06);transform-origin:0 0">0.00</div>
<div class="ab" style="left:1720px;top:253px;font-size:24.6px;color:#000;transform:scaleY(1.06);transform-origin:0 0">2021</div>
<svg class="ab" style="left:4px;top:250px" width="32" height="34" viewBox="0 0 32 34"><defs><linearGradient id="pg5" x1="0" y1="0" x2="1" y2="1"><stop offset="0" stop-color="#ffffff"/><stop offset="1" stop-color="#d8d8d8"/></linearGradient></defs><path d="M1 1.5 L17.5 1.5 L23.5 7.5 L23.5 28 L1 28 Z" fill="url(#pg5)" stroke="#6a6a6a" stroke-width="1.3" stroke-linejoin="round"/><path d="M17.5 1.5 L17.5 7.5 L23.5 7.5" fill="#eee" stroke="#6a6a6a" stroke-width="1.1"/><circle cx="21.8" cy="24" r="6.5" fill="#e5440f" stroke="#b8300a" stroke-width="0.6"/><circle cx="20" cy="22" r="2.2" fill="#ff9470" opacity="0.8"/></svg>
<div class="ab" style="left:0;top:285px;width:1744px;height:38px;background:#ffffff"></div>
<div class="ab" style="left:0;top:323px;width:1744px;height:1px;background:#d4d4d4"></div>
<div class="ab" style="left:219px;top:285px;width:1px;height:38px;background:#d4d4d4"></div>
<div class="ab" style="left:593px;top:285px;width:1px;height:38px;background:#d4d4d4"></div>
<div class="ab" style="left:763px;top:285px;width:1px;height:38px;background:#d4d4d4"></div>
<div class="ab" style="left:899px;top:285px;width:1px;height:38px;background:#d4d4d4"></div>
<div class="ab" style="left:1069px;top:285px;width:1px;height:38px;background:#d4d4d4"></div>
<div class="ab" style="left:1239px;top:285px;width:1px;height:38px;background:#d4d4d4"></div>
<div class="ab" style="left:1409px;top:285px;width:1px;height:38px;background:#d4d4d4"></div>
<div class="ab" style="left:1579px;top:285px;width:1px;height:38px;background:#d4d4d4"></div>
<div class="ab" style="left:40px;top:292px;font-size:24.6px;color:#000;transform:scaleY(1.06);transform-origin:0 0">79473475</div>
<div class="ab" style="right:1158px;top:292px;font-size:24.6px;color:#000;transform:scaleY(1.06);transform-origin:0 0">2021.11.16 22:53:59</div>
<div class="ab" style="right:988px;top:292px;font-size:24.6px;color:#000;transform:scaleY(1.06);transform-origin:0 0">sell</div>
<div class="ab" style="right:850px;top:292px;font-size:24.6px;color:#000;transform:scaleY(1.06);transform-origin:0 0">0.10</div>
<div class="ab" style="right:681px;top:292px;font-size:24.6px;color:#000;transform:scaleY(1.06);transform-origin:0 0">gbpjpy</div>
<div class="ab" style="right:511px;top:292px;font-size:24.6px;color:#000;transform:scaleY(1.06);transform-origin:0 0">154.103</div>
<div class="ab" style="right:341px;top:292px;font-size:24.6px;color:#000;transform:scaleY(1.06);transform-origin:0 0">0.000</div>
<div class="ab" style="right:171px;top:292px;font-size:24.6px;color:#000;transform:scaleY(1.06);transform-origin:0 0">0.000</div>
<div class="ab" style="left:1720px;top:292px;font-size:24.6px;color:#000;transform:scaleY(1.06);transform-origin:0 0">2021</div>
<svg class="ab" style="left:4px;top:289px" width="32" height="34" viewBox="0 0 32 34"><defs><linearGradient id="pg6" x1="0" y1="0" x2="1" y2="1"><stop offset="0" stop-color="#ffffff"/><stop offset="1" stop-color="#d8d8d8"/></linearGradient></defs><path d="M1 1.5 L17.5 1.5 L23.5 7.5 L23.5 28 L1 28 Z" fill="url(#pg6)" stroke="#6a6a6a" stroke-width="1.3" stroke-linejoin="round"/><path d="M17.5 1.5 L17.5 7.5 L23.5 7.5" fill="#eee" stroke="#6a6a6a" stroke-width="1.1"/><circle cx="21.8" cy="24" r="6.5" fill="#e5440f" stroke="#b8300a" stroke-width="0.6"/><circle cx="20" cy="22" r="2.2" fill="#ff9470" opacity="0.8"/></svg>
<div class="ab" style="left:0;top:324px;width:1744px;height:38px;background:#ebebeb"></div>
<div class="ab" style="left:0;top:362px;width:1744px;height:1px;background:#d4d4d4"></div>
<div class="ab" style="left:219px;top:324px;width:1px;height:38px;background:#d4d4d4"></div>
<div class="ab" style="left:593px;top:324px;width:1px;height:38px;background:#d4d4d4"></div>
<div class="ab" style="left:763px;top:324px;width:1px;height:38px;background:#d4d4d4"></div>
<div class="ab" style="left:899px;top:324px;width:1px;height:38px;background:#d4d4d4"></div>
<div class="ab" style="left:1069px;top:324px;width:1px;height:38px;background:#d4d4d4"></div>
<div class="ab" style="left:1239px;top:324px;width:1px;height:38px;background:#d4d4d4"></div>
<div class="ab" style="left:1409px;top:324px;width:1px;height:38px;background:#d4d4d4"></div>
<div class="ab" style="left:1579px;top:324px;width:1px;height:38px;background:#d4d4d4"></div>
<div class="ab" style="left:40px;top:331px;font-size:24.6px;color:#000;transform:scaleY(1.06);transform-origin:0 0">79634197</div>
<div class="ab" style="right:1158px;top:331px;font-size:24.6px;color:#000;transform:scaleY(1.06);transform-origin:0 0">2021.11.29 01:11:16</div>
<div class="ab" style="right:988px;top:331px;font-size:24.6px;color:#000;transform:scaleY(1.06);transform-origin:0 0">sell</div>
<div class="ab" style="right:850px;top:331px;font-size:24.6px;color:#000;transform:scaleY(1.06);transform-origin:0 0">0.08</div>
<div class="ab" style="right:681px;top:331px;font-size:24.6px;color:#000;transform:scaleY(1.06);transform-origin:0 0">gbpjpy</div>
<div class="ab" style="right:511px;top:331px;font-size:24.6px;color:#000;transform:scaleY(1.06);transform-origin:0 0">151.591</div>
<div class="ab" style="right:341px;top:331px;font-size:24.6px;color:#000;transform:scaleY(1.06);transform-origin:0 0">0.000</div>
<div class="ab" style="right:171px;top:331px;font-size:24.6px;color:#000;transform:scaleY(1.06);transform-origin:0 0">0.000</div>
<div class="ab" style="left:1720px;top:331px;font-size:24.6px;color:#000;transform:scaleY(1.06);transform-origin:0 0">2021</div>
<svg class="ab" style="left:4px;top:328px" width="32" height="34" viewBox="0 0 32 34"><defs><linearGradient id="pg7" x1="0" y1="0" x2="1" y2="1"><stop offset="0" stop-color="#ffffff"/><stop offset="1" stop-color="#d8d8d8"/></linearGradient></defs><path d="M1 1.5 L17.5 1.5 L23.5 7.5 L23.5 28 L1 28 Z" fill="url(#pg7)" stroke="#6a6a6a" stroke-width="1.3" stroke-linejoin="round"/><path d="M17.5 1.5 L17.5 7.5 L23.5 7.5" fill="#eee" stroke="#6a6a6a" stroke-width="1.1"/><circle cx="21.8" cy="24" r="6.5" fill="#e5440f" stroke="#b8300a" stroke-width="0.6"/><circle cx="20" cy="22" r="2.2" fill="#ff9470" opacity="0.8"/></svg>
<div class="ab" style="left:0;top:363px;width:1744px;height:38px;background:#ffffff"></div>
<div class="ab" style="left:0;top:401px;width:1744px;height:1px;background:#d4d4d4"></div>
<div class="ab" style="left:219px;top:363px;width:1px;height:38px;background:#d4d4d4"></div>
<div class="ab" style="left:593px;top:363px;width:1px;height:38px;background:#d4d4d4"></div>
<div class="ab" style="left:763px;top:363px;width:1px;height:38px;background:#d4d4d4"></div>
<div class="ab" style="left:899px;top:363px;width:1px;height:38px;background:#d4d4d4"></div>
<div class="ab" style="left:1069px;top:363px;width:1px;height:38px;background:#d4d4d4"></div>
<div class="ab" style="left:1239px;top:363px;width:1px;height:38px;background:#d4d4d4"></div>
<div class="ab" style="left:1409px;top:363px;width:1px;height:38px;background:#d4d4d4"></div>
<div class="ab" style="left:1579px;top:363px;width:1px;height:38px;background:#d4d4d4"></div>
<div class="ab" style="left:40px;top:370px;font-size:24.6px;color:#000;transform:scaleY(1.06);transform-origin:0 0">79679835</div>
<div class="ab" style="right:1158px;top:370px;font-size:24.6px;color:#000;transform:scaleY(1.06);transform-origin:0 0">2021.12.01 03:05:55</div>
<div class="ab" style="right:988px;top:370px;font-size:24.6px;color:#000;transform:scaleY(1.06);transform-origin:0 0">sell</div>
<div class="ab" style="right:850px;top:370px;font-size:24.6px;color:#000;transform:scaleY(1.06);transform-origin:0 0">0.04</div>
<div class="ab" style="right:681px;top:370px;font-size:24.6px;color:#000;transform:scaleY(1.06);transform-origin:0 0">gbpjpy</div>
<div class="ab" style="right:511px;top:370px;font-size:24.6px;color:#000;transform:scaleY(1.06);transform-origin:0 0">150.701</div>
<div class="ab" style="right:341px;top:370px;font-size:24.6px;color:#000;transform:scaleY(1.06);transform-origin:0 0">0.000</div>
<div class="ab" style="right:171px;top:370px;font-size:24.6px;color:#000;transform:scaleY(1.06);transform-origin:0 0">0.000</div>
<div class="ab" style="left:1720px;top:370px;font-size:24.6px;color:#000;transform:scaleY(1.06);transform-origin:0 0">2021</div>
<svg class="ab" style="left:4px;top:367px" width="32" height="34" viewBox="0 0 32 34"><defs><linearGradient id="pg8" x1="0" y1="0" x2="1" y2="1"><stop offset="0" stop-color="#ffffff"/><stop offset="1" stop-color="#d8d8d8"/></linearGradient></defs><path d="M1 1.5 L17.5 1.5 L23.5 7.5 L23.5 28 L1 28 Z" fill="url(#pg8)" stroke="#6a6a6a" stroke-width="1.3" stroke-linejoin="round"/><path d="M17.5 1.5 L17.5 7.5 L23.5 7.5" fill="#eee" stroke="#6a6a6a" stroke-width="1.1"/><circle cx="21.8" cy="24" r="6.5" fill="#e5440f" stroke="#b8300a" stroke-width="0.6"/><circle cx="20" cy="22" r="2.2" fill="#ff9470" opacity="0.8"/></svg>
<div class="ab" style="left:0;top:402px;width:1744px;height:38px;background:#ebebeb"></div>
<div class="ab" style="left:0;top:440px;width:1744px;height:1px;background:#d4d4d4"></div>
<div class="ab" style="left:219px;top:402px;width:1px;height:38px;background:#d4d4d4"></div>
<div class="ab" style="left:593px;top:402px;width:1px;height:38px;background:#d4d4d4"></div>
<div class="ab" style="left:763px;top:402px;width:1px;height:38px;background:#d4d4d4"></div>
<div class="ab" style="left:899px;top:402px;width:1px;height:38px;background:#d4d4d4"></div>
<div class="ab" style="left:1069px;top:402px;width:1px;height:38px;background:#d4d4d4"></div>
<div class="ab" style="left:1239px;top:402px;width:1px;height:38px;background:#d4d4d4"></div>
<div class="ab" style="left:1409px;top:402px;width:1px;height:38px;background:#d4d4d4"></div>
<div class="ab" style="left:1579px;top:402px;width:1px;height:38px;background:#d4d4d4"></div>
<div class="ab" style="left:40px;top:409px;font-size:24.6px;color:#000;transform:scaleY(1.06);transform-origin:0 0">79679838</div>
<div class="ab" style="right:1158px;top:409px;font-size:24.6px;color:#000;transform:scaleY(1.06);transform-origin:0 0">2021.12.01 02:27:35</div>
<div class="ab" style="right:988px;top:409px;font-size:24.6px;color:#000;transform:scaleY(1.06);transform-origin:0 0">sell limit</div>
<div class="ab" style="right:850px;top:409px;font-size:24.6px;color:#000;transform:scaleY(1.06);transform-origin:0 0">0.04</div>
<div class="ab" style="right:681px;top:409px;font-size:24.6px;color:#000;transform:scaleY(1.06);transform-origin:0 0">gbpjpy</div>
<div class="ab" style="right:511px;top:409px;font-size:24.6px;color:#000;transform:scaleY(1.06);transform-origin:0 0">151.500</div>
<div class="ab" style="right:341px;top:409px;font-size:24.6px;color:#000;transform:scaleY(1.06);transform-origin:0 0">0.000</div>
<div class="ab" style="right:171px;top:409px;font-size:24.6px;color:#000;transform:scaleY(1.06);transform-origin:0 0">0.000</div>
<div class="ab" style="left:1720px;top:409px;font-size:24.6px;color:#000;transform:scaleY(1.06);transform-origin:0 0">2021</div>
<svg class="ab" style="left:4px;top:406px" width="32" height="34" viewBox="0 0 32 34"><defs><linearGradient id="pg9" x1="0" y1="0" x2="1" y2="1"><stop offset="0" stop-color="#ffffff"/><stop offset="1" stop-color="#d8d8d8"/></linearGradient></defs><path d="M1 1.5 L17.5 1.5 L23.5 7.5 L23.5 28 L1 28 Z" fill="url(#pg9)" stroke="#6a6a6a" stroke-width="1.3" stroke-linejoin="round"/><path d="M17.5 1.5 L17.5 7.5 L23.5 7.5" fill="#eee" stroke="#6a6a6a" stroke-width="1.1"/><circle cx="21.8" cy="24" r="6.5" fill="#e5440f" stroke="#b8300a" stroke-width="0.6"/><circle cx="20" cy="22" r="2.2" fill="#ff9470" opacity="0.8"/></svg>
<div class="ab" style="left:0;top:441px;width:1744px;height:38px;background:#ffffff"></div>
<div class="ab" style="left:0;top:479px;width:1744px;height:1px;background:#d4d4d4"></div>
<div class="ab" style="left:219px;top:441px;width:1px;height:38px;background:#d4d4d4"></div>
<div class="ab" style="left:593px;top:441px;width:1px;height:38px;background:#d4d4d4"></div>
<div class="ab" style="left:763px;top:441px;width:1px;height:38px;background:#d4d4d4"></div>
<div class="ab" style="left:899px;top:441px;width:1px;height:38px;background:#d4d4d4"></div>
<div class="ab" style="left:1069px;top:441px;width:1px;height:38px;background:#d4d4d4"></div>
<div class="ab" style="left:1239px;top:441px;width:1px;height:38px;background:#d4d4d4"></div>
<div class="ab" style="left:1409px;top:441px;width:1px;height:38px;background:#d4d4d4"></div>
<div class="ab" style="left:1579px;top:441px;width:1px;height:38px;background:#d4d4d4"></div>
<div class="ab" style="left:40px;top:448px;font-size:24.6px;color:#000;transform:scaleY(1.06);transform-origin:0 0">79700610</div>
<div class="ab" style="right:1158px;top:448px;font-size:24.6px;color:#000;transform:scaleY(1.06);transform-origin:0 0">2021.12.01 21:48:56</div>
<div class="ab" style="right:988px;top:448px;font-size:24.6px;color:#000;transform:scaleY(1.06);transform-origin:0 0">sell</div>
<div class="ab" style="right:850px;top:448px;font-size:24.6px;color:#000;transform:scaleY(1.06);transform-origin:0 0">0.20</div>
<div class="ab" style="right:681px;top:448px;font-size:24.6px;color:#000;transform:scaleY(1.06);transform-origin:0 0">usdcad</div>
<div class="ab" style="right:511px;top:448px;font-size:24.6px;color:#000;transform:scaleY(1.06);transform-origin:0 0">1.28059</div>
<div class="ab" style="right:341px;top:448px;font-size:24.6px;color:#000;transform:scaleY(1.06);transform-origin:0 0">0.00000</div>
<div class="ab" style="right:171px;top:448px;font-size:24.6px;color:#000;transform:scaleY(1.06);transform-origin:0 0">0.00000</div>
<div class="ab" style="left:1720px;top:448px;font-size:24.6px;color:#000;transform:scaleY(1.06);transform-origin:0 0">2021</div>
<svg class="ab" style="left:4px;top:445px" width="32" height="34" viewBox="0 0 32 34"><defs><linearGradient id="pg10" x1="0" y1="0" x2="1" y2="1"><stop offset="0" stop-color="#ffffff"/><stop offset="1" stop-color="#d8d8d8"/></linearGradient></defs><path d="M1 1.5 L17.5 1.5 L23.5 7.5 L23.5 28 L1 28 Z" fill="url(#pg10)" stroke="#6a6a6a" stroke-width="1.3" stroke-linejoin="round"/><path d="M17.5 1.5 L17.5 7.5 L23.5 7.5" fill="#eee" stroke="#6a6a6a" stroke-width="1.1"/><circle cx="21.8" cy="24" r="6.5" fill="#e5440f" stroke="#b8300a" stroke-width="0.6"/><circle cx="20" cy="22" r="2.2" fill="#ff9470" opacity="0.8"/></svg>
<div class="ab" style="left:0;top:479px;width:1744px;height:39px;background:#c8c8c8"></div>
<div class="ab" style="left:1px;top:475px;width:861px;height:55px;border:6px solid #ffb900;border-radius:7px"></div>
<div class="ab" style="left:13px;top:493px;width:14px;height:14px;border-radius:50%;background:radial-gradient(circle at 40% 40%,#d8d8d8,#9a9a9a);border:1px solid #9a9a9a"></div>
<div class="ab" style="left:40px;top:485.5px;font-size:27px;font-weight:bold;color:#000"><span style="font-size:24px">盈/亏</span>:</div>
<div class="ab" style="left:111.5px;top:485.5px;font-size:27px;font-weight:bold;color:#000">18 602.84</div>
<div class="ab" style="left:246px;top:485.5px;font-size:27px;font-weight:bold;color:#000"><span style="font-size:24px">信用额</span>:</div>
<div class="ab" style="left:332px;top:485.5px;font-size:27px;font-weight:bold;color:#000">700.00</div>
<div class="ab" style="left:428px;top:485.5px;font-size:27px;font-weight:bold;color:#000"><span style="font-size:24px">存款</span>:</div>
<div class="ab" style="left:489px;top:485.5px;font-size:27px;font-weight:bold;color:#000">12 280.39</div>
<div class="ab" style="left:623px;top:485.5px;font-size:27px;font-weight:bold;color:#000"><span style="font-size:24px">取款</span>:</div>
<div class="ab" style="left:685px;top:485.5px;font-size:27px;font-weight:bold;color:#000">-22 240.81</div>
</div>
</body></html>
